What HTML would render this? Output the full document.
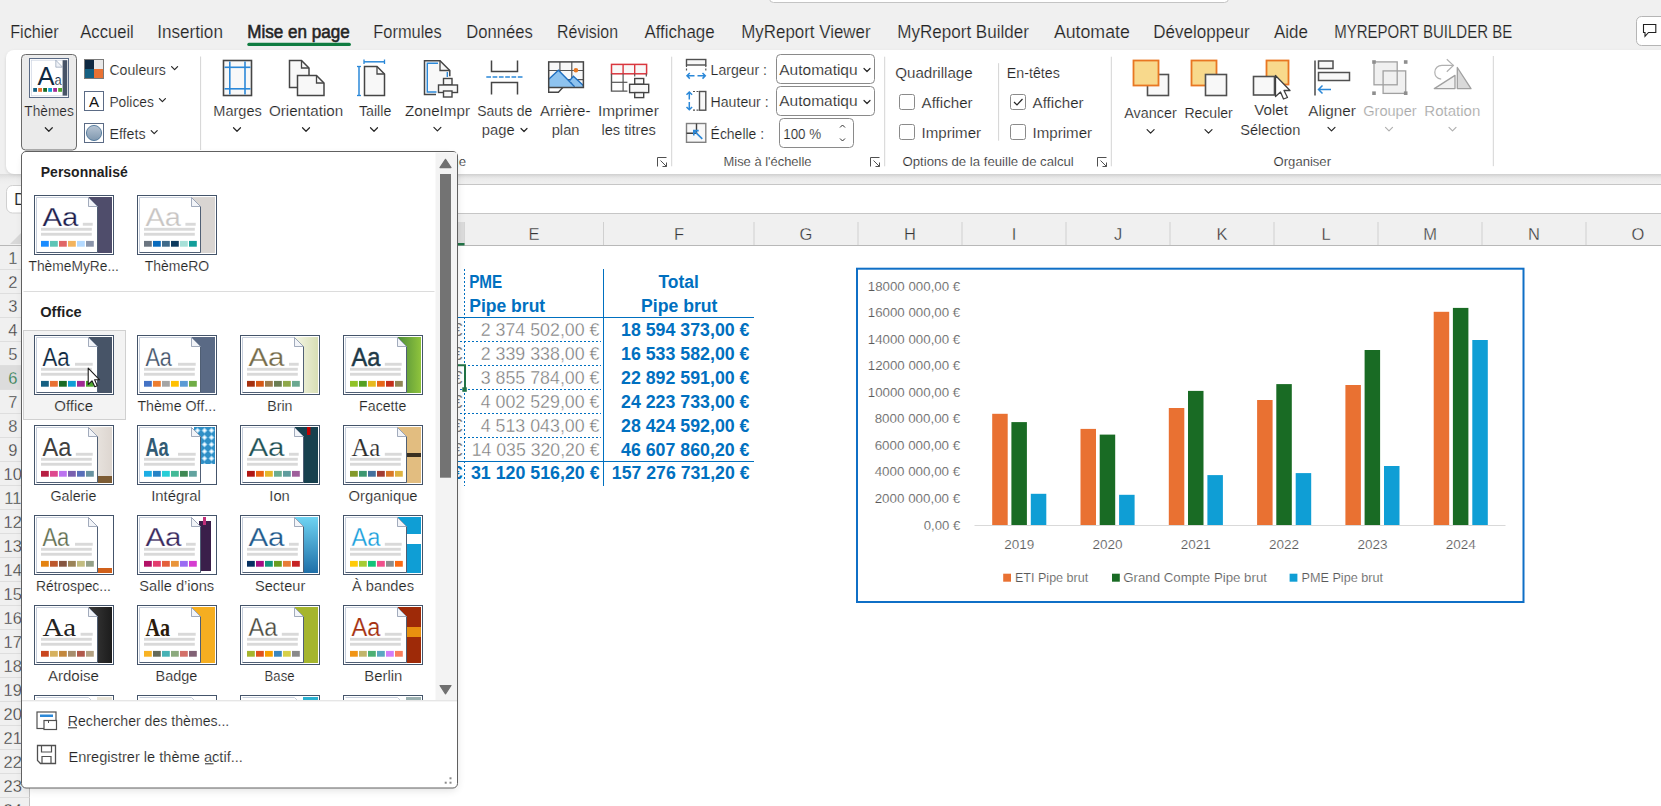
<!DOCTYPE html>
<html><head><meta charset="utf-8"><title>Excel</title>
<style>html,body{margin:0;padding:0;background:#f0f0f0;overflow:hidden}svg{display:block}text{font-family:"Liberation Sans",sans-serif}</style>
</head><body>
<svg width="1661" height="806" viewBox="0 0 1661 806">
<rect x="0" y="0" width="1661" height="806" fill="#f0f0f0"/>
<text x="10.2" y="37.8" font-size="17.5" textLength="48.5" lengthAdjust="spacingAndGlyphs" fill="#242424" stroke="#f0f0f0" stroke-width="0.18">Fichier</text>
<text x="80.3" y="37.8" font-size="17.5" textLength="53.5" lengthAdjust="spacingAndGlyphs" fill="#242424" stroke="#f0f0f0" stroke-width="0.18">Accueil</text>
<text x="157.3" y="37.8" font-size="17.5" textLength="65.6" lengthAdjust="spacingAndGlyphs" fill="#242424" stroke="#f0f0f0" stroke-width="0.18">Insertion</text>
<text x="247.3" y="37.8" font-size="17.5" textLength="102.5" lengthAdjust="spacingAndGlyphs" fill="#242424" stroke="#242424" stroke-width="0.55">Mise en page</text>
<text x="373.3" y="37.8" font-size="17.5" textLength="68.4" lengthAdjust="spacingAndGlyphs" fill="#242424" stroke="#f0f0f0" stroke-width="0.18">Formules</text>
<text x="466.3" y="37.8" font-size="17.5" textLength="66.5" lengthAdjust="spacingAndGlyphs" fill="#242424" stroke="#f0f0f0" stroke-width="0.18">Données</text>
<text x="557.1" y="37.8" font-size="17.5" textLength="60.9" lengthAdjust="spacingAndGlyphs" fill="#242424" stroke="#f0f0f0" stroke-width="0.18">Révision</text>
<text x="644.4" y="37.8" font-size="17.5" textLength="70.3" lengthAdjust="spacingAndGlyphs" fill="#242424" stroke="#f0f0f0" stroke-width="0.18">Affichage</text>
<text x="741.3" y="37.8" font-size="17.5" textLength="129.3" lengthAdjust="spacingAndGlyphs" fill="#242424" stroke="#f0f0f0" stroke-width="0.18">MyReport Viewer</text>
<text x="897.2" y="37.8" font-size="17.5" textLength="131.8" lengthAdjust="spacingAndGlyphs" fill="#242424" stroke="#f0f0f0" stroke-width="0.18">MyReport Builder</text>
<text x="1053.9" y="37.8" font-size="17.5" textLength="75.9" lengthAdjust="spacingAndGlyphs" fill="#242424" stroke="#f0f0f0" stroke-width="0.18">Automate</text>
<text x="1153.3" y="37.8" font-size="17.5" textLength="96.4" lengthAdjust="spacingAndGlyphs" fill="#242424" stroke="#f0f0f0" stroke-width="0.18">Développeur</text>
<text x="1274.0" y="37.8" font-size="17.5" textLength="33.9" lengthAdjust="spacingAndGlyphs" fill="#242424" stroke="#f0f0f0" stroke-width="0.18">Aide</text>
<text x="1334.2" y="37.8" font-size="17.5" textLength="178.0" lengthAdjust="spacingAndGlyphs" fill="#242424" stroke="#f0f0f0" stroke-width="0.18">MYREPORT BUILDER BE</text>
<rect x="247.3" y="42.8" width="103.6" height="3.2" fill="#107c41" rx="1.6"/>
<rect x="769.5" y="-10" width="459" height="12.5" fill="#ffffff" stroke="#c4c4c4" stroke-width="1" rx="4"/>
<rect x="1636.5" y="16.5" width="40" height="29" fill="#ffffff" stroke="#b5b5b5" stroke-width="1" rx="5"/>
<path d="M1643.5 24.5h12.3v8h-7.3l-3.5 3.8v-3.8h-1.5z" fill="none" stroke="#202020" stroke-width="1.1"/>
<defs><filter id="rsh" x="-5%" y="-20%" width="110%" height="150%"><feGaussianBlur stdDeviation="1.6"/></filter><filter id="dsh" x="-10%" y="-10%" width="130%" height="130%"><feGaussianBlur stdDeviation="4"/></filter><linearGradient id="band" x1="0" y1="0" x2="0" y2="1"><stop offset="0" stop-color="#dcdcdc"/><stop offset="0.5" stop-color="#ececec"/><stop offset="1" stop-color="#f0f0f0"/></linearGradient></defs>
<rect x="0" y="174" width="1661" height="10.5" fill="url(#band)"/>
<rect x="6" y="51.5" width="1681" height="123.5" fill="#c8c8c8" rx="8" filter="url(#rsh)" opacity="0.8"/>
<rect x="6" y="50" width="1681" height="124" fill="#ffffff" rx="8"/>
<line x1="200.6" y1="56.5" x2="200.6" y2="150" stroke="#d4d4d4" stroke-width="1" />
<line x1="671.7" y1="56.7" x2="671.7" y2="166.3" stroke="#d4d4d4" stroke-width="1" />
<line x1="884.7" y1="56.7" x2="884.7" y2="166.3" stroke="#d4d4d4" stroke-width="1" />
<line x1="1111.3" y1="56.7" x2="1111.3" y2="166.3" stroke="#d4d4d4" stroke-width="1" />
<line x1="1493.3" y1="56" x2="1493.3" y2="166.2" stroke="#d4d4d4" stroke-width="1" />
<line x1="998.6" y1="63.2" x2="998.6" y2="140.7" stroke="#d4d4d4" stroke-width="1" />
<rect x="21.5" y="54.5" width="55" height="95.5" fill="#ebebeb" stroke="#6b6b6b" stroke-width="1" rx="4"/>
<rect x="29.5" y="58.5" width="39" height="39" fill="#ffffff" stroke="#5b6b85" stroke-width="1"/>
<rect x="31.3" y="60.2" width="35.6" height="35.6" fill="#ffffff" stroke="#c9d2e0" stroke-width="0.7"/>
<rect x="62.6" y="60.2" width="4.6" height="35.4" fill="#475467"/>
<path d="M55.8 60.2 L62.6 67.2 L55.8 67.2 Z" fill="#eef1f6" stroke="#8090a8" stroke-width="0.6"/>
<text x="37.5" y="85" font-size="26" textLength="17" lengthAdjust="spacingAndGlyphs" fill="#0e2841">A</text>
<text x="54.5" y="85" font-size="14.5" textLength="7.2" lengthAdjust="spacingAndGlyphs" fill="#0e2841" stroke="#ffffff" stroke-width="0.18">a</text>
<rect x="33.2" y="88" width="3.8" height="3.8" fill="#156082"/>
<rect x="38.2" y="88" width="3.8" height="3.8" fill="#e97132"/>
<rect x="43.2" y="88" width="3.8" height="3.8" fill="#196b24"/>
<rect x="48.2" y="88" width="3.8" height="3.8" fill="#0f9ed5"/>
<rect x="53.2" y="88" width="3.8" height="3.8" fill="#a02b93"/>
<rect x="58.2" y="88" width="3.8" height="3.8" fill="#4ea72e"/>
<text x="24.3" y="115.6" font-size="15" textLength="49.5" lengthAdjust="spacingAndGlyphs" fill="#262626" stroke="#ffffff" stroke-width="0.18">Thèmes</text>
<path d="M45.3 127.75L48.8 131.25L52.3 127.75" fill="none" stroke="#262626" stroke-width="1.2" stroke-linecap="round" stroke-linejoin="round"/>
<rect x="84.5" y="59.5" width="19" height="19" fill="#0e2841" stroke="#7a7a7a" stroke-width="1"/>
<rect x="94" y="59.5" width="9.5" height="9.5" fill="#e8e8e8"/>
<rect x="84.5" y="69" width="9.5" height="9.5" fill="#156082"/>
<rect x="94" y="69" width="9.5" height="9.5" fill="#e97132"/>
<rect x="84.5" y="59.5" width="19" height="19" fill="none" stroke="#7a7a7a" stroke-width="1"/>
<text x="109.4" y="74.7" font-size="15" textLength="56.5" lengthAdjust="spacingAndGlyphs" fill="#262626" stroke="#ffffff" stroke-width="0.18">Couleurs</text>
<path d="M171.6 66.7L174.6 69.7L177.6 66.7" fill="none" stroke="#262626" stroke-width="1.2" stroke-linecap="round" stroke-linejoin="round"/>
<rect x="84.5" y="91.5" width="19" height="19" fill="#ffffff" stroke="#5b6b85" stroke-width="1"/>
<text x="88.9" y="106.8" font-size="15.4" textLength="10.1" lengthAdjust="spacingAndGlyphs" fill="#111111" stroke-width="0">A</text>
<text x="109.4" y="106.9" font-size="15" textLength="44.5" lengthAdjust="spacingAndGlyphs" fill="#262626" stroke="#ffffff" stroke-width="0.18">Polices</text>
<path d="M159.4 98.7L162.4 101.7L165.4 98.7" fill="none" stroke="#262626" stroke-width="1.2" stroke-linecap="round" stroke-linejoin="round"/>
<rect x="84.5" y="123.5" width="19" height="19" fill="#ffffff" stroke="#5b6b85" stroke-width="1"/>
<defs><linearGradient id="eff" x1="0" y1="0" x2="0" y2="1"><stop offset="0" stop-color="#b7c5d4"/><stop offset="1" stop-color="#7f97ae"/></linearGradient></defs>
<circle cx="94" cy="133" r="7.6" fill="url(#eff)" stroke="#3d6a90" stroke-width="0.8"/>
<text x="109.4" y="138.7" font-size="15" textLength="36.2" lengthAdjust="spacingAndGlyphs" fill="#262626" stroke="#ffffff" stroke-width="0.18">Effets</text>
<path d="M151.2 130.7L154.2 133.7L157.2 130.7" fill="none" stroke="#262626" stroke-width="1.2" stroke-linecap="round" stroke-linejoin="round"/>
<rect x="223.5" y="60.5" width="28" height="35" fill="#f8f8f8" stroke="#454545" stroke-width="1.6"/>
<line x1="229.8" y1="61.5" x2="229.8" y2="94.5" stroke="#2b88d8" stroke-width="1.6" />
<line x1="245" y1="61.5" x2="245" y2="94.5" stroke="#2b88d8" stroke-width="1.6" />
<line x1="224.5" y1="67.3" x2="250.5" y2="67.3" stroke="#2b88d8" stroke-width="1.6" />
<line x1="224.5" y1="88.8" x2="250.5" y2="88.8" stroke="#2b88d8" stroke-width="1.6" />
<text x="213.3" y="115.7" font-size="15" textLength="48.5" lengthAdjust="spacingAndGlyphs" fill="#262626" stroke="#ffffff" stroke-width="0.18">Marges</text>
<path d="M233.5 127.75L237 131.25L240.5 127.75" fill="none" stroke="#262626" stroke-width="1.2" stroke-linecap="round" stroke-linejoin="round"/>
<path d="M297 87.5 H289.5 V60.5 H301.5 L309 68 V75.5" fill="#f8f8f8" stroke="#454545" stroke-width="1.5"/>
<path d="M301.5 60.5 V68 H309" fill="none" stroke="#454545" stroke-width="1.3"/>
<path d="M297.5 75.5 H316.5 L324 83 V95.5 H297.5 Z" fill="#f8f8f8" stroke="#454545" stroke-width="1.5"/>
<path d="M316.5 75.5 V83 H324" fill="none" stroke="#454545" stroke-width="1.3"/>
<text x="268.9" y="115.7" font-size="15" textLength="74.3" lengthAdjust="spacingAndGlyphs" fill="#262626" stroke="#ffffff" stroke-width="0.18">Orientation</text>
<path d="M302.5 127.75L306 131.25L309.5 127.75" fill="none" stroke="#262626" stroke-width="1.2" stroke-linecap="round" stroke-linejoin="round"/>
<path d="M364.5 66.5 H377 L384.5 74 V95.5 H364.5 Z" fill="#f8f8f8" stroke="#454545" stroke-width="1.5"/>
<path d="M377 66.5 V74 H384.5" fill="none" stroke="#454545" stroke-width="1.3"/>
<line x1="364" y1="61.8" x2="384.5" y2="61.8" stroke="#2b88d8" stroke-width="1.5" />
<line x1="364" y1="59.5" x2="364" y2="64" stroke="#2b88d8" stroke-width="1.3" />
<line x1="384.5" y1="59.5" x2="384.5" y2="64" stroke="#2b88d8" stroke-width="1.3" />
<line x1="359" y1="66.5" x2="359" y2="95.5" stroke="#2b88d8" stroke-width="1.5" />
<line x1="357" y1="66.5" x2="361" y2="66.5" stroke="#2b88d8" stroke-width="1.3" />
<line x1="357" y1="95.5" x2="361" y2="95.5" stroke="#2b88d8" stroke-width="1.3" />
<text x="358.9" y="115.7" font-size="15" textLength="32.4" lengthAdjust="spacingAndGlyphs" fill="#262626" stroke="#ffffff" stroke-width="0.18">Taille</text>
<path d="M370.5 127.75L374 131.25L377.5 127.75" fill="none" stroke="#262626" stroke-width="1.2" stroke-linecap="round" stroke-linejoin="round"/>
<path d="M436 94.5H424.5V60.8H440L449.8 70.5V76.3" fill="#f8f8f8" stroke="#454545" stroke-width="1.5"/>
<path d="M440 60.8V70.5H449.8" fill="none" stroke="#454545" stroke-width="1.3"/>
<path d="M436.5 92H427.3V63.3H438" fill="none" stroke="#2b88d8" stroke-width="1.4"/>
<line x1="447.3" y1="72" x2="447.3" y2="77" stroke="#2b88d8" stroke-width="1.4" />
<rect x="443.5" y="78.5" width="8.5" height="6.5" fill="#f8f8f8" stroke="#454545" stroke-width="1.4"/>
<rect x="438.5" y="85" width="19" height="7.5" fill="#f8f8f8" stroke="#454545" stroke-width="1.4"/>
<rect x="443.5" y="91" width="8.5" height="6" fill="#f8f8f8" stroke="#454545" stroke-width="1.4"/>
<text x="405" y="115.7" font-size="15" textLength="65" lengthAdjust="spacingAndGlyphs" fill="#262626" stroke="#ffffff" stroke-width="0.18">ZoneImpr</text>
<path d="M433.9 127.44999999999999L437.4 130.95L440.9 127.44999999999999" fill="none" stroke="#262626" stroke-width="1.2" stroke-linecap="round" stroke-linejoin="round"/>
<path d="M491.5 60.5 V71.5 H517.5 V60.5" fill="none" stroke="#454545" stroke-width="1.5"/>
<path d="M491.5 94.5 V82.5 H517.5 V94.5" fill="none" stroke="#454545" stroke-width="1.5"/>
<line x1="486.3" y1="77" x2="522.8" y2="77" stroke="#2b88d8" stroke-width="1.4" stroke-dasharray="4.7 1.6"/>
<text x="477.2" y="115.7" font-size="15" textLength="55.1" lengthAdjust="spacingAndGlyphs" fill="#262626" stroke="#ffffff" stroke-width="0.18">Sauts de</text>
<text x="481.8" y="135.1" font-size="15" textLength="32.8" lengthAdjust="spacingAndGlyphs" fill="#262626" stroke="#ffffff" stroke-width="0.18">page</text>
<path d="M521 128.5L524 131.5L527 128.5" fill="none" stroke="#262626" stroke-width="1.2" stroke-linecap="round" stroke-linejoin="round"/>
<rect x="548.7" y="61.9" width="34.7" height="25.6" fill="#f8f8f8"/>
<line x1="559.9" y1="61.9" x2="559.9" y2="87.5" stroke="#555" stroke-width="1.2" />
<line x1="571.8" y1="61.9" x2="571.8" y2="87.5" stroke="#555" stroke-width="1.2" />
<line x1="548.7" y1="70.5" x2="583.4" y2="70.5" stroke="#555" stroke-width="1.2" />
<line x1="548.7" y1="79.6" x2="583.4" y2="79.6" stroke="#555" stroke-width="1.2" />
<path d="M548.7 87.5V79.2L558.4 70.2L574.7 86.8V87.5Z" fill="#8ec3ef" stroke="#fff" stroke-width="0.01"/>
<path d="M569.6 80.6L573.4 76.3L583.4 85.5V87.5H576Z" fill="#8ec3ef"/>
<path d="M548.7 79.2L558.4 70.2L574.7 86.8" fill="none" stroke="#1f6fc0" stroke-width="1.4"/>
<path d="M569.6 80.6L573.4 76.3L583.4 85.5" fill="none" stroke="#1f6fc0" stroke-width="1.4"/>
<circle cx="575.9" cy="70.3" r="2.3" fill="#e87722"/>
<rect x="548.7" y="61.9" width="34.7" height="25.6" fill="none" stroke="#454545" stroke-width="1.5"/>
<path d="M548.7 87.5V92.2H558.4L562.8 87.5" fill="none" stroke="#454545" stroke-width="1.4"/>
<text x="540" y="115.7" font-size="15" textLength="50.5" lengthAdjust="spacingAndGlyphs" fill="#262626" stroke="#ffffff" stroke-width="0.18">Arrière-</text>
<text x="551.7" y="135.1" font-size="15" textLength="27.8" lengthAdjust="spacingAndGlyphs" fill="#262626" stroke="#ffffff" stroke-width="0.18">plan</text>
<rect x="611.5" y="64.4" width="35.1" height="9.4" fill="#f8f8f8" stroke="#d9363e" stroke-width="1.5"/>
<line x1="623.1" y1="64.4" x2="623.1" y2="73.8" stroke="#d9363e" stroke-width="1.4" />
<line x1="634.7" y1="64.4" x2="634.7" y2="73.8" stroke="#d9363e" stroke-width="1.4" />
<path d="M611.5 73.8V91.1H627.4" fill="none" stroke="#555" stroke-width="1.4"/>
<line x1="611.5" y1="82.3" x2="627.4" y2="82.3" stroke="#555" stroke-width="1.2" />
<line x1="623.1" y1="73.8" x2="623.1" y2="91.1" stroke="#555" stroke-width="1.2" />
<line x1="634.7" y1="73.8" x2="634.7" y2="76.5" stroke="#555" stroke-width="1.2" />
<line x1="646.3" y1="73.8" x2="646.3" y2="76.5" stroke="#555" stroke-width="1.2" />
<rect x="634.7" y="78.5" width="9" height="5.8" fill="#f8f8f8" stroke="#454545" stroke-width="1.4"/>
<rect x="629.6" y="84.3" width="19.1" height="8.3" fill="#f8f8f8" stroke="#454545" stroke-width="1.4"/>
<rect x="634.7" y="92.6" width="9" height="5" fill="#f8f8f8" stroke="#454545" stroke-width="1.4"/>
<text x="598" y="115.7" font-size="15" textLength="60.8" lengthAdjust="spacingAndGlyphs" fill="#262626" stroke="#ffffff" stroke-width="0.18">Imprimer</text>
<text x="601.4" y="135.1" font-size="15" textLength="54.5" lengthAdjust="spacingAndGlyphs" fill="#262626" stroke="#ffffff" stroke-width="0.18">les titres</text>
<path d="M657.5 166.5V157.5H666.5" fill="none" stroke="#505050" stroke-width="1"/>
<path d="M660.5 160.5L666.5 166.5M666.5 162.5V166.5H662.5" fill="none" stroke="#505050" stroke-width="1"/>
<path d="M870.5 166.5V157.5H879.5" fill="none" stroke="#505050" stroke-width="1"/>
<path d="M873.5 160.5L879.5 166.5M879.5 162.5V166.5H875.5" fill="none" stroke="#505050" stroke-width="1"/>
<path d="M1097.5 166.5V157.5H1106.5" fill="none" stroke="#505050" stroke-width="1"/>
<path d="M1100.5 160.5L1106.5 166.5M1106.5 162.5V166.5H1102.5" fill="none" stroke="#505050" stroke-width="1"/>
<text x="387" y="166" font-size="12.5" textLength="79" lengthAdjust="spacingAndGlyphs" fill="#262626" stroke="#ffffff" stroke-width="0.18">Mise en page</text>
<rect x="686.5" y="59.5" width="19.3" height="5.5" fill="#f8f8f8" stroke="#505050" stroke-width="1.4"/>
<line x1="686.5" y1="65" x2="686.5" y2="71" stroke="#505050" stroke-width="1.2" stroke-dasharray="2 1.5"/>
<line x1="705.8" y1="65" x2="705.8" y2="71" stroke="#505050" stroke-width="1.2" stroke-dasharray="2 1.5"/>
<path d="M687 75.8H694.5M689.8 73L687 75.8L689.8 78.6M697.5 75.8H705.3M702.5 73L705.3 75.8L702.5 78.6" fill="none" stroke="#2b88d8" stroke-width="1.5"/>
<text x="710.6" y="74.8" font-size="15" textLength="56.3" lengthAdjust="spacingAndGlyphs" fill="#262626" stroke="#ffffff" stroke-width="0.18">Largeur :</text>
<rect x="776.5" y="54.5" width="98" height="29" fill="#ffffff" stroke="#8a8a8a" stroke-width="1" rx="4"/>
<text x="779.3" y="74.6" font-size="15" textLength="78.3" lengthAdjust="spacingAndGlyphs" fill="#262626" stroke="#ffffff" stroke-width="0.18">Automatiqu</text>
<path d="M864 68.5L867 71.5L870 68.5" fill="none" stroke="#262626" stroke-width="1.2" stroke-linecap="round" stroke-linejoin="round"/>
<rect x="699.5" y="91.5" width="6.3" height="18.7" fill="#f8f8f8" stroke="#505050" stroke-width="1.4"/>
<path d="M693 91.5H699M693 110.2H699" fill="none" stroke="#505050" stroke-width="1.2" stroke-dasharray="2 1.5"/>
<path d="M689.3 92V99.5M686.5 94.8L689.3 92L692.1 94.8M689.3 102V109.8M686.5 107L689.3 109.8L692.1 107" fill="none" stroke="#2b88d8" stroke-width="1.5"/>
<text x="710.6" y="106.6" font-size="15" textLength="58" lengthAdjust="spacingAndGlyphs" fill="#262626" stroke="#ffffff" stroke-width="0.18">Hauteur :</text>
<rect x="776.5" y="86.5" width="98" height="29" fill="#ffffff" stroke="#8a8a8a" stroke-width="1" rx="4"/>
<text x="779.3" y="106.4" font-size="15" textLength="78.3" lengthAdjust="spacingAndGlyphs" fill="#262626" stroke="#ffffff" stroke-width="0.18">Automatiqu</text>
<path d="M864 100.5L867 103.5L870 100.5" fill="none" stroke="#262626" stroke-width="1.2" stroke-linecap="round" stroke-linejoin="round"/>
<rect x="686.5" y="123.5" width="19.3" height="18.8" fill="#f8f8f8" stroke="#808080" stroke-width="1.4"/>
<path d="M686.5 133.3H696.5V123.5" fill="none" stroke="#404040" stroke-width="1.4"/>
<path d="M702.3 138.8L693.8 130.6M693.8 135.5V130.6H698.7" fill="none" stroke="#2b88d8" stroke-width="1.6"/>
<text x="710.6" y="139.1" font-size="15" textLength="53.5" lengthAdjust="spacingAndGlyphs" fill="#262626" stroke="#ffffff" stroke-width="0.18">Échelle :</text>
<rect x="779.5" y="118.5" width="74" height="29" fill="#ffffff" stroke="#8a8a8a" stroke-width="1" rx="4"/>
<text x="783.2" y="139.1" font-size="15" textLength="38" lengthAdjust="spacingAndGlyphs" fill="#262626" stroke="#ffffff" stroke-width="0.18">100 %</text>
<path d="M840 127.5L842.5 125L845 127.5" fill="none" stroke="#303030" stroke-width="1"/>
<path d="M840 138.5L842.5 141L845 138.5" fill="none" stroke="#303030" stroke-width="1"/>
<text x="723.5" y="165.5" font-size="12.5" textLength="88" lengthAdjust="spacingAndGlyphs" fill="#262626" stroke="#ffffff" stroke-width="0.18">Mise à l&#x27;échelle</text>
<text x="895.2" y="77.9" font-size="15" textLength="77.5" lengthAdjust="spacingAndGlyphs" fill="#262626" stroke="#ffffff" stroke-width="0.18">Quadrillage</text>
<text x="1006.8" y="77.9" font-size="15" textLength="53" lengthAdjust="spacingAndGlyphs" fill="#262626" stroke="#ffffff" stroke-width="0.18">En-têtes</text>
<rect x="899.5" y="94.5" width="15" height="15" fill="#ffffff" stroke="#8a8a8a" stroke-width="1" rx="2"/>
<text x="921.6" y="108.1" font-size="15" textLength="51" lengthAdjust="spacingAndGlyphs" fill="#262626" stroke="#ffffff" stroke-width="0.18">Afficher</text>
<rect x="899.5" y="124.5" width="15" height="15" fill="#ffffff" stroke="#8a8a8a" stroke-width="1" rx="2"/>
<text x="921.6" y="138.1" font-size="15" textLength="59.5" lengthAdjust="spacingAndGlyphs" fill="#262626" stroke="#ffffff" stroke-width="0.18">Imprimer</text>
<rect x="1010.5" y="94.5" width="15" height="15" fill="#ffffff" stroke="#8a8a8a" stroke-width="1" rx="2"/>
<text x="1032.6" y="108.1" font-size="15" textLength="51" lengthAdjust="spacingAndGlyphs" fill="#262626" stroke="#ffffff" stroke-width="0.18">Afficher</text>
<rect x="1010.5" y="124.5" width="15" height="15" fill="#ffffff" stroke="#8a8a8a" stroke-width="1" rx="2"/>
<text x="1032.6" y="138.1" font-size="15" textLength="59.5" lengthAdjust="spacingAndGlyphs" fill="#262626" stroke="#ffffff" stroke-width="0.18">Imprimer</text>
<path d="M1014 102L1017 105L1022.5 99" fill="none" stroke="#262626" stroke-width="1.2"/>
<text x="902.5" y="165.5" font-size="12.5" textLength="171.3" lengthAdjust="spacingAndGlyphs" fill="#262626" stroke="#ffffff" stroke-width="0.18">Options de la feuille de calcul</text>
<rect x="1147.5" y="74.5" width="21" height="21" fill="#f8f8f8" stroke="#505050" stroke-width="1.6"/>
<rect x="1133.5" y="60.5" width="25" height="25" fill="#f8d98c" stroke="#e87722" stroke-width="1.8"/>
<text x="1124.3" y="117.8" font-size="15" textLength="52.4" lengthAdjust="spacingAndGlyphs" fill="#262626" stroke="#ffffff" stroke-width="0.18">Avancer</text>
<path d="M1147.1 129.65L1150.6 133.15L1154.1 129.65" fill="none" stroke="#262626" stroke-width="1.2" stroke-linecap="round" stroke-linejoin="round"/>
<rect x="1191.5" y="60.5" width="25" height="25" fill="#f8d98c" stroke="#e87722" stroke-width="1.8"/>
<rect x="1205.5" y="74.5" width="21" height="21" fill="#f8f8f8" stroke="#505050" stroke-width="1.6"/>
<text x="1184.4" y="117.8" font-size="15" textLength="48.4" lengthAdjust="spacingAndGlyphs" fill="#262626" stroke="#ffffff" stroke-width="0.18">Reculer</text>
<path d="M1205.0 129.65L1208.5 133.15L1212.0 129.65" fill="none" stroke="#262626" stroke-width="1.2" stroke-linecap="round" stroke-linejoin="round"/>
<rect x="1266.5" y="60.5" width="22" height="24" fill="#f8d98c" stroke="#e87722" stroke-width="1.8"/>
<rect x="1253.5" y="76.5" width="21" height="18.5" fill="#f8f8f8" stroke="#505050" stroke-width="1.6"/>
<path d="M1275.5 75.5L1290 90.5H1284L1287.5 97.5L1283.5 99L1280.5 92L1275.5 96.5Z" fill="#ffffff" stroke="#404040" stroke-width="1.3" stroke-linejoin="round"/>
<text x="1254.2" y="115.1" font-size="15" textLength="33.8" lengthAdjust="spacingAndGlyphs" fill="#262626" stroke="#ffffff" stroke-width="0.18">Volet</text>
<text x="1240.2" y="135.3" font-size="15" textLength="60.2" lengthAdjust="spacingAndGlyphs" fill="#262626" stroke="#ffffff" stroke-width="0.18">Sélection</text>
<line x1="1315" y1="60.5" x2="1315" y2="95.5" stroke="#555" stroke-width="1.6" />
<rect x="1318.5" y="61" width="14.5" height="7.5" fill="#f8f8f8" stroke="#505050" stroke-width="1.5"/>
<rect x="1318.5" y="72.5" width="31" height="8" fill="#f8f8f8" stroke="#505050" stroke-width="1.5"/>
<path d="M1331 89.5H1318.5M1322.5 85.5L1318.5 89.5L1322.5 93.5" fill="none" stroke="#2b88d8" stroke-width="1.5"/>
<text x="1308.3" y="115.5" font-size="15" textLength="47.6" lengthAdjust="spacingAndGlyphs" fill="#262626" stroke="#ffffff" stroke-width="0.18">Aligner</text>
<path d="M1328.0 127.44999999999999L1331.5 130.95L1335.0 127.44999999999999" fill="none" stroke="#262626" stroke-width="1.2" stroke-linecap="round" stroke-linejoin="round"/>
<rect x="1374" y="61.9" width="23.2" height="22.9" fill="#f0f0f0"/>
<rect x="1383.1" y="70.9" width="22.6" height="22.5" fill="#f0f0f0"/>
<rect x="1374" y="61.9" width="23.2" height="22.9" fill="none" stroke="#a0a0a0" stroke-width="1.3"/>
<rect x="1383.1" y="70.9" width="22.6" height="22.5" fill="none" stroke="#a0a0a0" stroke-width="1.3"/>
<rect x="1372.2" y="60.2" width="3.6" height="3.6" fill="#8e8e8e"/>
<rect x="1403.9" y="60.2" width="3.6" height="3.6" fill="#8e8e8e"/>
<rect x="1372.2" y="91.4" width="3.6" height="3.6" fill="#8e8e8e"/>
<rect x="1403.9" y="91.4" width="3.6" height="3.6" fill="#8e8e8e"/>
<text x="1363.2" y="115.5" font-size="15" textLength="53.5" lengthAdjust="spacingAndGlyphs" fill="#a8a8a8" stroke="#ffffff" stroke-width="0.18">Grouper</text>
<path d="M1385.5 127.44999999999999L1389 130.95L1392.5 127.44999999999999" fill="none" stroke="#b0b0b0" stroke-width="1.2" stroke-linecap="round" stroke-linejoin="round"/>
<path d="M1441.2 79.2C1436.5 78.5 1434.8 75 1434.8 72.3C1434.8 68 1438 65.4 1441.9 65.4H1453.6" fill="none" stroke="#b0b0b0" stroke-width="1.2"/>
<path d="M1446.8 59.3L1453.4 65.4L1446.8 71.8" fill="none" stroke="#b0b0b0" stroke-width="1.2"/>
<path d="M1434.3 88.6L1455 75.4V88.6Z" fill="#f0f0f0" stroke="#a0a0a0" stroke-width="1.3" stroke-linejoin="round"/>
<path d="M1457.3 67.5L1471 88.6H1457.3Z" fill="#d9d9d9" stroke="#a0a0a0" stroke-width="1.3" stroke-linejoin="round"/>
<text x="1424.3" y="115.5" font-size="15" textLength="56" lengthAdjust="spacingAndGlyphs" fill="#a8a8a8" stroke="#ffffff" stroke-width="0.18">Rotation</text>
<path d="M1449.0 127.44999999999999L1452.5 130.95L1456.0 127.44999999999999" fill="none" stroke="#b0b0b0" stroke-width="1.2" stroke-linecap="round" stroke-linejoin="round"/>
<text x="1273.6" y="166.3" font-size="12.5" textLength="57.4" lengthAdjust="spacingAndGlyphs" fill="#262626" stroke="#ffffff" stroke-width="0.18">Organiser</text>
<line x1="60" y1="184.5" x2="1661" y2="184.5" stroke="#c6c6c6" stroke-width="1" />
<rect x="0" y="185" width="1661" height="28" fill="#f0f0f0"/>
<rect x="60" y="185" width="1661" height="28" fill="#ffffff"/>
<rect x="6.5" y="185.5" width="60" height="27.5" fill="#ffffff" stroke="#d0d0d0" stroke-width="1" rx="6"/>
<text x="14.1" y="204.5" font-size="16.3" textLength="22" lengthAdjust="spacingAndGlyphs" fill="#262626" stroke="#ffffff" stroke-width="0.18">D6</text>
<line x1="60" y1="213.5" x2="1661" y2="213.5" stroke="#c6c6c6" stroke-width="1" />
<rect x="0" y="214" width="1661" height="31" fill="#f0f0f0"/>
<line x1="0" y1="245.5" x2="1661" y2="245.5" stroke="#b8b8b8" stroke-width="1" />
<line x1="464.5" y1="222" x2="464.5" y2="245" stroke="#d0d0d0" stroke-width="1" />
<line x1="603.5" y1="222" x2="603.5" y2="245" stroke="#d0d0d0" stroke-width="1" />
<line x1="754" y1="222" x2="754" y2="245" stroke="#d0d0d0" stroke-width="1" />
<line x1="858" y1="222" x2="858" y2="245" stroke="#d0d0d0" stroke-width="1" />
<line x1="962" y1="222" x2="962" y2="245" stroke="#d0d0d0" stroke-width="1" />
<line x1="1066" y1="222" x2="1066" y2="245" stroke="#d0d0d0" stroke-width="1" />
<line x1="1170" y1="222" x2="1170" y2="245" stroke="#d0d0d0" stroke-width="1" />
<line x1="1274" y1="222" x2="1274" y2="245" stroke="#d0d0d0" stroke-width="1" />
<line x1="1378" y1="222" x2="1378" y2="245" stroke="#d0d0d0" stroke-width="1" />
<line x1="1482" y1="222" x2="1482" y2="245" stroke="#d0d0d0" stroke-width="1" />
<line x1="1586" y1="222" x2="1586" y2="245" stroke="#d0d0d0" stroke-width="1" />
<line x1="1690" y1="222" x2="1690" y2="245" stroke="#d0d0d0" stroke-width="1" />
<rect x="380" y="222" width="84.5" height="23" fill="#dcdcdc"/>
<rect x="380" y="243" width="84.5" height="2.5" fill="#217346"/>
<text x="534" y="239.8" font-size="16.5" fill="#363636" text-anchor="middle" stroke="#f0f0f0" stroke-width="0.3">E</text>
<text x="679" y="239.8" font-size="16.5" fill="#363636" text-anchor="middle" stroke="#f0f0f0" stroke-width="0.3">F</text>
<text x="806" y="239.8" font-size="16.5" fill="#363636" text-anchor="middle" stroke="#f0f0f0" stroke-width="0.3">G</text>
<text x="910" y="239.8" font-size="16.5" fill="#363636" text-anchor="middle" stroke="#f0f0f0" stroke-width="0.3">H</text>
<text x="1014" y="239.8" font-size="16.5" fill="#363636" text-anchor="middle" stroke="#f0f0f0" stroke-width="0.3">I</text>
<text x="1118" y="239.8" font-size="16.5" fill="#363636" text-anchor="middle" stroke="#f0f0f0" stroke-width="0.3">J</text>
<text x="1222" y="239.8" font-size="16.5" fill="#363636" text-anchor="middle" stroke="#f0f0f0" stroke-width="0.3">K</text>
<text x="1326" y="239.8" font-size="16.5" fill="#363636" text-anchor="middle" stroke="#f0f0f0" stroke-width="0.3">L</text>
<text x="1430" y="239.8" font-size="16.5" fill="#363636" text-anchor="middle" stroke="#f0f0f0" stroke-width="0.3">M</text>
<text x="1534" y="239.8" font-size="16.5" fill="#363636" text-anchor="middle" stroke="#f0f0f0" stroke-width="0.3">N</text>
<text x="1638" y="239.8" font-size="16.5" fill="#363636" text-anchor="middle" stroke="#f0f0f0" stroke-width="0.3">O</text>
<path d="M10 244L22 232V244Z" fill="#d8d8d8"/>
<rect x="30" y="246" width="1661" height="806" fill="#ffffff"/>
<rect x="0" y="246" width="29.5" height="806" fill="#f0f0f0"/>
<line x1="29.5" y1="246" x2="29.5" y2="806" stroke="#c0c0c0" stroke-width="1" />
<rect x="0" y="365.5" width="29.5" height="24" fill="#dcdcdc"/>
<text x="12.8" y="263.8" font-size="16.5" fill="#363636" text-anchor="middle" stroke="#f0f0f0" stroke-width="0.3">1</text>
<line x1="0" y1="269.5" x2="29.5" y2="269.5" stroke="#dedede" stroke-width="1" />
<text x="12.8" y="287.8" font-size="16.5" fill="#363636" text-anchor="middle" stroke="#f0f0f0" stroke-width="0.3">2</text>
<line x1="0" y1="293.5" x2="29.5" y2="293.5" stroke="#dedede" stroke-width="1" />
<text x="12.8" y="311.8" font-size="16.5" fill="#363636" text-anchor="middle" stroke="#f0f0f0" stroke-width="0.3">3</text>
<line x1="0" y1="317.5" x2="29.5" y2="317.5" stroke="#dedede" stroke-width="1" />
<text x="12.8" y="335.8" font-size="16.5" fill="#363636" text-anchor="middle" stroke="#f0f0f0" stroke-width="0.3">4</text>
<line x1="0" y1="341.5" x2="29.5" y2="341.5" stroke="#dedede" stroke-width="1" />
<text x="12.8" y="359.8" font-size="16.5" fill="#363636" text-anchor="middle" stroke="#f0f0f0" stroke-width="0.3">5</text>
<line x1="0" y1="365.5" x2="29.5" y2="365.5" stroke="#dedede" stroke-width="1" />
<text x="12.8" y="383.8" font-size="16.5" fill="#217346" text-anchor="middle" stroke="#dcdcdc" stroke-width="0.3">6</text>
<line x1="0" y1="389.5" x2="29.5" y2="389.5" stroke="#dedede" stroke-width="1" />
<text x="12.8" y="407.8" font-size="16.5" fill="#363636" text-anchor="middle" stroke="#f0f0f0" stroke-width="0.3">7</text>
<line x1="0" y1="413.5" x2="29.5" y2="413.5" stroke="#dedede" stroke-width="1" />
<text x="12.8" y="431.8" font-size="16.5" fill="#363636" text-anchor="middle" stroke="#f0f0f0" stroke-width="0.3">8</text>
<line x1="0" y1="437.5" x2="29.5" y2="437.5" stroke="#dedede" stroke-width="1" />
<text x="12.8" y="455.8" font-size="16.5" fill="#363636" text-anchor="middle" stroke="#f0f0f0" stroke-width="0.3">9</text>
<line x1="0" y1="461.5" x2="29.5" y2="461.5" stroke="#dedede" stroke-width="1" />
<text x="12.8" y="479.8" font-size="16.5" fill="#363636" text-anchor="middle" stroke="#f0f0f0" stroke-width="0.3">10</text>
<line x1="0" y1="485.5" x2="29.5" y2="485.5" stroke="#dedede" stroke-width="1" />
<text x="12.8" y="503.8" font-size="16.5" fill="#363636" text-anchor="middle" stroke="#f0f0f0" stroke-width="0.3">11</text>
<line x1="0" y1="509.5" x2="29.5" y2="509.5" stroke="#dedede" stroke-width="1" />
<text x="12.8" y="527.8" font-size="16.5" fill="#363636" text-anchor="middle" stroke="#f0f0f0" stroke-width="0.3">12</text>
<line x1="0" y1="533.5" x2="29.5" y2="533.5" stroke="#dedede" stroke-width="1" />
<text x="12.8" y="551.8" font-size="16.5" fill="#363636" text-anchor="middle" stroke="#f0f0f0" stroke-width="0.3">13</text>
<line x1="0" y1="557.5" x2="29.5" y2="557.5" stroke="#dedede" stroke-width="1" />
<text x="12.8" y="575.8" font-size="16.5" fill="#363636" text-anchor="middle" stroke="#f0f0f0" stroke-width="0.3">14</text>
<line x1="0" y1="581.5" x2="29.5" y2="581.5" stroke="#dedede" stroke-width="1" />
<text x="12.8" y="599.8" font-size="16.5" fill="#363636" text-anchor="middle" stroke="#f0f0f0" stroke-width="0.3">15</text>
<line x1="0" y1="605.5" x2="29.5" y2="605.5" stroke="#dedede" stroke-width="1" />
<text x="12.8" y="623.8" font-size="16.5" fill="#363636" text-anchor="middle" stroke="#f0f0f0" stroke-width="0.3">16</text>
<line x1="0" y1="629.5" x2="29.5" y2="629.5" stroke="#dedede" stroke-width="1" />
<text x="12.8" y="647.8" font-size="16.5" fill="#363636" text-anchor="middle" stroke="#f0f0f0" stroke-width="0.3">17</text>
<line x1="0" y1="653.5" x2="29.5" y2="653.5" stroke="#dedede" stroke-width="1" />
<text x="12.8" y="671.8" font-size="16.5" fill="#363636" text-anchor="middle" stroke="#f0f0f0" stroke-width="0.3">18</text>
<line x1="0" y1="677.5" x2="29.5" y2="677.5" stroke="#dedede" stroke-width="1" />
<text x="12.8" y="695.8" font-size="16.5" fill="#363636" text-anchor="middle" stroke="#f0f0f0" stroke-width="0.3">19</text>
<line x1="0" y1="701.5" x2="29.5" y2="701.5" stroke="#dedede" stroke-width="1" />
<text x="12.8" y="719.8" font-size="16.5" fill="#363636" text-anchor="middle" stroke="#f0f0f0" stroke-width="0.3">20</text>
<line x1="0" y1="725.5" x2="29.5" y2="725.5" stroke="#dedede" stroke-width="1" />
<text x="12.8" y="743.8" font-size="16.5" fill="#363636" text-anchor="middle" stroke="#f0f0f0" stroke-width="0.3">21</text>
<line x1="0" y1="749.5" x2="29.5" y2="749.5" stroke="#dedede" stroke-width="1" />
<text x="12.8" y="767.8" font-size="16.5" fill="#363636" text-anchor="middle" stroke="#f0f0f0" stroke-width="0.3">22</text>
<line x1="0" y1="773.5" x2="29.5" y2="773.5" stroke="#dedede" stroke-width="1" />
<text x="12.8" y="791.8" font-size="16.5" fill="#363636" text-anchor="middle" stroke="#f0f0f0" stroke-width="0.3">23</text>
<line x1="0" y1="797.5" x2="29.5" y2="797.5" stroke="#dedede" stroke-width="1" />
<text x="12.8" y="815.8" font-size="16.5" fill="#363636" text-anchor="middle" stroke="#f0f0f0" stroke-width="0.3">24</text>
<line x1="464.5" y1="269" x2="464.5" y2="486" stroke="#0070c0" stroke-width="1" stroke-dasharray="2 2"/>
<line x1="603.5" y1="269" x2="603.5" y2="486" stroke="#0070c0" stroke-width="1" />
<line x1="440" y1="317.5" x2="754" y2="317.5" stroke="#0070c0" stroke-width="1" />
<line x1="440" y1="461.5" x2="754" y2="461.5" stroke="#0070c0" stroke-width="1" />
<line x1="440" y1="341.5" x2="601" y2="341.5" stroke="#0070c0" stroke-width="1" stroke-dasharray="2 2"/>
<line x1="440" y1="365.5" x2="601" y2="365.5" stroke="#0070c0" stroke-width="1" stroke-dasharray="2 2"/>
<line x1="440" y1="389.5" x2="601" y2="389.5" stroke="#0070c0" stroke-width="1" stroke-dasharray="2 2"/>
<line x1="440" y1="413.5" x2="601" y2="413.5" stroke="#0070c0" stroke-width="1" stroke-dasharray="2 2"/>
<line x1="440" y1="437.5" x2="601" y2="437.5" stroke="#0070c0" stroke-width="1" stroke-dasharray="2 2"/>
<text x="469.2" y="287.8" font-size="17.5" textLength="33" lengthAdjust="spacingAndGlyphs" font-weight="bold" fill="#0070c0">PME</text>
<text x="469.2" y="311.8" font-size="17.5" textLength="76" lengthAdjust="spacingAndGlyphs" font-weight="bold" fill="#0070c0">Pipe brut</text>
<text x="658.4" y="287.8" font-size="17.5" textLength="40.4" lengthAdjust="spacingAndGlyphs" font-weight="bold" fill="#0070c0">Total</text>
<text x="641" y="311.8" font-size="17.5" textLength="76.4" lengthAdjust="spacingAndGlyphs" font-weight="bold" fill="#0070c0">Pipe brut</text>
<text x="480.7" y="335.6" font-size="17.5" textLength="118.8" lengthAdjust="spacingAndGlyphs" fill="#767676" stroke="#ffffff" stroke-width="0.35">2 374 502,00 €</text>
<text x="621" y="335.6" font-size="17.5" textLength="128.5" lengthAdjust="spacingAndGlyphs" font-weight="bold" fill="#0070c0">18 594 373,00 €</text>
<text x="480.7" y="359.6" font-size="17.5" textLength="118.8" lengthAdjust="spacingAndGlyphs" fill="#767676" stroke="#ffffff" stroke-width="0.35">2 339 338,00 €</text>
<text x="621" y="359.6" font-size="17.5" textLength="128.5" lengthAdjust="spacingAndGlyphs" font-weight="bold" fill="#0070c0">16 533 582,00 €</text>
<text x="480.7" y="383.6" font-size="17.5" textLength="118.8" lengthAdjust="spacingAndGlyphs" fill="#767676" stroke="#ffffff" stroke-width="0.35">3 855 784,00 €</text>
<text x="621" y="383.6" font-size="17.5" textLength="128.5" lengthAdjust="spacingAndGlyphs" font-weight="bold" fill="#0070c0">22 892 591,00 €</text>
<text x="480.7" y="407.6" font-size="17.5" textLength="118.8" lengthAdjust="spacingAndGlyphs" fill="#767676" stroke="#ffffff" stroke-width="0.35">4 002 529,00 €</text>
<text x="621" y="407.6" font-size="17.5" textLength="128.5" lengthAdjust="spacingAndGlyphs" font-weight="bold" fill="#0070c0">24 223 733,00 €</text>
<text x="480.7" y="431.6" font-size="17.5" textLength="118.8" lengthAdjust="spacingAndGlyphs" fill="#767676" stroke="#ffffff" stroke-width="0.35">4 513 043,00 €</text>
<text x="621" y="431.6" font-size="17.5" textLength="128.5" lengthAdjust="spacingAndGlyphs" font-weight="bold" fill="#0070c0">28 424 592,00 €</text>
<text x="471.7" y="455.6" font-size="17.5" textLength="127.8" lengthAdjust="spacingAndGlyphs" fill="#767676" stroke="#ffffff" stroke-width="0.35">14 035 320,20 €</text>
<text x="621" y="455.6" font-size="17.5" textLength="128.5" lengthAdjust="spacingAndGlyphs" font-weight="bold" fill="#0070c0">46 607 860,20 €</text>
<text x="470.9" y="478.7" font-size="17.5" textLength="128.7" lengthAdjust="spacingAndGlyphs" font-weight="bold" fill="#0070c0">31 120 516,20 €</text>
<defs><clipPath id="dcl"><rect x="457.5" y="320" width="7" height="170"/></clipPath></defs><g clip-path="url(#dcl)">
<text x="462.5" y="335.6" font-size="17.5" fill="#767676" text-anchor="end" stroke="#ffffff" stroke-width="0.18">€</text>
<text x="462.5" y="359.6" font-size="17.5" fill="#767676" text-anchor="end" stroke="#ffffff" stroke-width="0.18">€</text>
<text x="462.5" y="383.6" font-size="17.5" fill="#767676" text-anchor="end" stroke="#ffffff" stroke-width="0.18">€</text>
<text x="462.5" y="407.6" font-size="17.5" fill="#767676" text-anchor="end" stroke="#ffffff" stroke-width="0.18">€</text>
<text x="462.5" y="431.6" font-size="17.5" fill="#767676" text-anchor="end" stroke="#ffffff" stroke-width="0.18">€</text>
<text x="462.5" y="455.6" font-size="17.5" fill="#767676" text-anchor="end" stroke="#ffffff" stroke-width="0.18">€</text>
<text x="462.5" y="478.7" font-size="17.5" font-weight="bold" fill="#0070c0" text-anchor="end">€</text>
</g>
<text x="611.8" y="478.7" font-size="17.5" textLength="137.7" lengthAdjust="spacingAndGlyphs" font-weight="bold" fill="#0070c0">157 276 731,20 €</text>
<path d="M440 365.3H465V388.5" fill="none" stroke="#217346" stroke-width="2"/>
<rect x="462.3" y="387.3" width="4.5" height="4.5" fill="#217346"/>
<rect x="857" y="268.7" width="666.5" height="333.3" fill="#ffffff" stroke="#0f6fc6" stroke-width="2"/>
<text x="960.2" y="529.5" font-size="13.5" textLength="36.5" lengthAdjust="spacingAndGlyphs" fill="#595959" text-anchor="end" stroke="#ffffff" stroke-width="0.18">0,00 €</text>
<text x="960.2" y="502.99" font-size="13.5" textLength="85.5" lengthAdjust="spacingAndGlyphs" fill="#595959" text-anchor="end" stroke="#ffffff" stroke-width="0.18">2000 000,00 €</text>
<text x="960.2" y="476.48" font-size="13.5" textLength="85.5" lengthAdjust="spacingAndGlyphs" fill="#595959" text-anchor="end" stroke="#ffffff" stroke-width="0.18">4000 000,00 €</text>
<text x="960.2" y="449.97" font-size="13.5" textLength="85.5" lengthAdjust="spacingAndGlyphs" fill="#595959" text-anchor="end" stroke="#ffffff" stroke-width="0.18">6000 000,00 €</text>
<text x="960.2" y="423.46" font-size="13.5" textLength="85.5" lengthAdjust="spacingAndGlyphs" fill="#595959" text-anchor="end" stroke="#ffffff" stroke-width="0.18">8000 000,00 €</text>
<text x="960.2" y="396.95" font-size="13.5" textLength="92.4" lengthAdjust="spacingAndGlyphs" fill="#595959" text-anchor="end" stroke="#ffffff" stroke-width="0.18">10000 000,00 €</text>
<text x="960.2" y="370.44" font-size="13.5" textLength="92.4" lengthAdjust="spacingAndGlyphs" fill="#595959" text-anchor="end" stroke="#ffffff" stroke-width="0.18">12000 000,00 €</text>
<text x="960.2" y="343.92999999999995" font-size="13.5" textLength="92.4" lengthAdjust="spacingAndGlyphs" fill="#595959" text-anchor="end" stroke="#ffffff" stroke-width="0.18">14000 000,00 €</text>
<text x="960.2" y="317.41999999999996" font-size="13.5" textLength="92.4" lengthAdjust="spacingAndGlyphs" fill="#595959" text-anchor="end" stroke="#ffffff" stroke-width="0.18">16000 000,00 €</text>
<text x="960.2" y="290.90999999999997" font-size="13.5" textLength="92.4" lengthAdjust="spacingAndGlyphs" fill="#595959" text-anchor="end" stroke="#ffffff" stroke-width="0.18">18000 000,00 €</text>
<line x1="974.5" y1="525.5" x2="1505.5" y2="525.5" stroke="#d9d9d9" stroke-width="1" />
<rect x="992.2" y="413.8" width="15.5" height="111.19999999999999" fill="#e97132"/>
<rect x="1011.4000000000001" y="422.1" width="15.5" height="102.89999999999998" fill="#196b24"/>
<rect x="1030.8" y="493.8" width="15.5" height="31.19999999999999" fill="#0f9ed5"/>
<text x="1019.2" y="548.7" font-size="13.5" fill="#595959" text-anchor="middle" stroke="#ffffff" stroke-width="0.18">2019</text>
<rect x="1080.5" y="428.9" width="15.5" height="96.10000000000002" fill="#e97132"/>
<rect x="1099.7" y="434.6" width="15.5" height="90.39999999999998" fill="#196b24"/>
<rect x="1119.1" y="494.8" width="15.5" height="30.19999999999999" fill="#0f9ed5"/>
<text x="1107.5" y="548.7" font-size="13.5" fill="#595959" text-anchor="middle" stroke="#ffffff" stroke-width="0.18">2020</text>
<rect x="1168.8" y="408" width="15.5" height="117" fill="#e97132"/>
<rect x="1188.0" y="390.9" width="15.5" height="134.10000000000002" fill="#196b24"/>
<rect x="1207.3999999999999" y="475.1" width="15.5" height="49.89999999999998" fill="#0f9ed5"/>
<text x="1195.8" y="548.7" font-size="13.5" fill="#595959" text-anchor="middle" stroke="#ffffff" stroke-width="0.18">2021</text>
<rect x="1257.1" y="400" width="15.5" height="125" fill="#e97132"/>
<rect x="1276.3" y="384.1" width="15.5" height="140.89999999999998" fill="#196b24"/>
<rect x="1295.6999999999998" y="473.1" width="15.5" height="51.89999999999998" fill="#0f9ed5"/>
<text x="1284.1" y="548.7" font-size="13.5" fill="#595959" text-anchor="middle" stroke="#ffffff" stroke-width="0.18">2022</text>
<rect x="1345.4" y="385" width="15.5" height="140" fill="#e97132"/>
<rect x="1364.6000000000001" y="350" width="15.5" height="175" fill="#196b24"/>
<rect x="1384.0" y="466" width="15.5" height="59" fill="#0f9ed5"/>
<text x="1372.4" y="548.7" font-size="13.5" fill="#595959" text-anchor="middle" stroke="#ffffff" stroke-width="0.18">2023</text>
<rect x="1433.7" y="311.8" width="15.5" height="213.2" fill="#e97132"/>
<rect x="1452.9" y="307.9" width="15.5" height="217.10000000000002" fill="#196b24"/>
<rect x="1472.3" y="340" width="15.5" height="185" fill="#0f9ed5"/>
<text x="1460.7" y="548.7" font-size="13.5" fill="#595959" text-anchor="middle" stroke="#ffffff" stroke-width="0.18">2024</text>
<rect x="1003.2" y="573.7" width="7.8" height="8" fill="#e97132"/>
<text x="1014.9" y="581.6" font-size="13.5" textLength="73.4" lengthAdjust="spacingAndGlyphs" fill="#595959" stroke="#ffffff" stroke-width="0.18">ETI Pipe brut</text>
<rect x="1112" y="573.7" width="7.8" height="8" fill="#196b24"/>
<text x="1123.2" y="581.6" font-size="13.5" textLength="143.8" lengthAdjust="spacingAndGlyphs" fill="#595959" stroke="#ffffff" stroke-width="0.18">Grand Compte Pipe brut</text>
<rect x="1289.6" y="573.7" width="7.8" height="8" fill="#0f9ed5"/>
<text x="1301.5" y="581.6" font-size="13.5" textLength="81.5" lengthAdjust="spacingAndGlyphs" fill="#595959" stroke="#ffffff" stroke-width="0.18">PME Pipe brut</text>
<rect x="24" y="156" width="433" height="634" fill="#000000" rx="6" filter="url(#dsh)" opacity="0.13"/>
<rect x="21.5" y="151.5" width="436" height="636.5" fill="#ffffff" stroke="#606060" stroke-width="1" rx="4.5"/>
<rect x="435.5" y="152.5" width="21.5" height="547.5" fill="#f3f3f3"/>
<path d="M440 167.6L445.5 159.3L451 167.6Z" fill="#707070" stroke="#707070" stroke-width="1.2" stroke-linejoin="round"/>
<rect x="440" y="174" width="11" height="303.7" fill="#737373"/>
<path d="M440 685.5L445.5 693.8L451 685.5Z" fill="#707070" stroke="#707070" stroke-width="1.2" stroke-linejoin="round"/>
<text x="40.8" y="176.5" font-size="14.5" textLength="87" lengthAdjust="spacingAndGlyphs" font-weight="bold" fill="#1f1f1f">Personnalisé</text>
<line x1="23.5" y1="291.5" x2="434.5" y2="291.5" stroke="#dcdcdc" stroke-width="1" />
<text x="40.2" y="316.5" font-size="14.5" textLength="41.5" lengthAdjust="spacingAndGlyphs" font-weight="bold" fill="#1f1f1f">Office</text>
<rect x="23.5" y="330.5" width="102" height="89" fill="#f3f3f3" stroke="#d0d0d0" stroke-width="1"/>
<defs><clipPath id="cl34_195"><rect x="34" y="195" width="80" height="60"/></clipPath></defs>
<g clip-path="url(#cl34_195)">
<rect x="34.5" y="195.5" width="79" height="59" fill="#ffffff" stroke="#44546a" stroke-width="1"/>
<rect x="36" y="197" width="76" height="56" fill="#ffffff"/>
<rect x="89" y="197" width="23" height="56" fill="#4f4d6b"/>
<path d="M36.5 197.5H88.5L97.5 206.5V252.5H36.5Z" fill="#ffffff" stroke="#b9c3d3" stroke-width="0.8"/>
<path d="M97.5 206.5V252.5H36.5" fill="none" stroke="#44546a" stroke-width="0.9"/>
<path d="M88.5 197.5V206.5H97.5Z" fill="#f2f4f8" stroke="#7d8aa0" stroke-width="0.7"/>
<text x="42.4" y="225.6" font-size="25.5" textLength="35.9" lengthAdjust="spacingAndGlyphs" fill="#1f1f4f" style="font-family:&quot;Liberation Sans&quot;" stroke="#ffffff" stroke-width="0.25">Aa</text>
<rect x="82.8" y="222.8" width="9.900000000000006" height="2.9" fill="#d9d9d9"/>
<rect x="41" y="227.8" width="50.8" height="2.9" fill="#d9d9d9"/>
<rect x="41" y="232.8" width="50.8" height="2.9" fill="#d9d9d9"/>
<rect x="41" y="240.9" width="7.8" height="5.8" fill="#1a8cff"/>
<rect x="50" y="240.9" width="7.8" height="5.8" fill="#5ec4b6"/>
<rect x="59" y="240.9" width="7.8" height="5.8" fill="#e06666"/>
<rect x="68" y="240.9" width="7.8" height="5.8" fill="#f2b35e"/>
<rect x="77" y="240.9" width="7.8" height="5.8" fill="#b3d9ff"/>
<rect x="86" y="240.9" width="7.8" height="5.8" fill="#8a94aa"/>
</g>
<defs><clipPath id="cl137_195"><rect x="137" y="195" width="80" height="60"/></clipPath></defs>
<g clip-path="url(#cl137_195)">
<rect x="137.5" y="195.5" width="79" height="59" fill="#ffffff" stroke="#44546a" stroke-width="1"/>
<rect x="139" y="197" width="76" height="56" fill="#ffffff"/>
<rect x="192" y="197" width="23" height="56" fill="#d9d5d2"/>
<path d="M139.5 197.5H191.5L200.5 206.5V252.5H139.5Z" fill="#ffffff" stroke="#b9c3d3" stroke-width="0.8"/>
<path d="M200.5 206.5V252.5H139.5" fill="none" stroke="#44546a" stroke-width="0.9"/>
<path d="M191.5 197.5V206.5H200.5Z" fill="#f2f4f8" stroke="#7d8aa0" stroke-width="0.7"/>
<text x="145.4" y="225.6" font-size="25.5" textLength="35.5" lengthAdjust="spacingAndGlyphs" fill="#c8c5c3" style="font-family:&quot;Liberation Sans&quot;" stroke="#ffffff" stroke-width="0.25">Aa</text>
<rect x="185.4" y="222.8" width="10.300000000000004" height="2.9" fill="#d9d9d9"/>
<rect x="144" y="227.8" width="50.8" height="2.9" fill="#d9d9d9"/>
<rect x="144" y="232.8" width="50.8" height="2.9" fill="#d9d9d9"/>
<rect x="144" y="240.9" width="7.8" height="5.8" fill="#6b7580"/>
<rect x="153" y="240.9" width="7.8" height="5.8" fill="#0a6bbd"/>
<rect x="162" y="240.9" width="7.8" height="5.8" fill="#3f6a8a"/>
<rect x="171" y="240.9" width="7.8" height="5.8" fill="#0d3a5e"/>
<rect x="180" y="240.9" width="7.8" height="5.8" fill="#a6e0d8"/>
<rect x="189" y="240.9" width="7.8" height="5.8" fill="#139e9a"/>
</g>
<text x="28.5" y="270.6" font-size="15" textLength="90.4" lengthAdjust="spacingAndGlyphs" fill="#262626" stroke="#ffffff" stroke-width="0.18">ThèmeMyRe...</text>
<text x="177" y="270.6" font-size="15" textLength="64.5" lengthAdjust="spacingAndGlyphs" fill="#262626" text-anchor="middle" stroke="#ffffff" stroke-width="0.18">ThèmeRO</text>
<defs><clipPath id="cl34_335"><rect x="34" y="335" width="80" height="60"/></clipPath></defs>
<g clip-path="url(#cl34_335)">
<rect x="34.5" y="335.5" width="79" height="59" fill="#ffffff" stroke="#44546a" stroke-width="1"/>
<rect x="36" y="337" width="76" height="56" fill="#ffffff"/>
<rect x="89" y="337" width="23" height="56" fill="#475467"/>
<path d="M36.5 337.5H88.5L97.5 346.5V392.5H36.5Z" fill="#ffffff" stroke="#b9c3d3" stroke-width="0.8"/>
<path d="M97.5 346.5V392.5H36.5" fill="none" stroke="#44546a" stroke-width="0.9"/>
<path d="M88.5 337.5V346.5H97.5Z" fill="#f2f4f8" stroke="#7d8aa0" stroke-width="0.7"/>
<text x="42.4" y="365.6" font-size="25.5" textLength="27.2" lengthAdjust="spacingAndGlyphs" fill="#0e2841" style="font-family:&quot;Liberation Sans&quot;" stroke="#ffffff" stroke-width="0.17">Aa</text>
<rect x="75" y="362.8" width="17.700000000000003" height="2.9" fill="#d9d9d9"/>
<rect x="41" y="367.8" width="50.8" height="2.9" fill="#d9d9d9"/>
<rect x="41" y="372.8" width="50.8" height="2.9" fill="#d9d9d9"/>
<rect x="41" y="380.9" width="7.8" height="5.8" fill="#156082"/>
<rect x="50" y="380.9" width="7.8" height="5.8" fill="#e97132"/>
<rect x="59" y="380.9" width="7.8" height="5.8" fill="#196b24"/>
<rect x="68" y="380.9" width="7.8" height="5.8" fill="#0f9ed5"/>
<rect x="77" y="380.9" width="7.8" height="5.8" fill="#a02b93"/>
<rect x="86" y="380.9" width="7.8" height="5.8" fill="#4ea72e"/>
</g>
<text x="54.3" y="410.6" font-size="15" textLength="38.8" lengthAdjust="spacingAndGlyphs" fill="#262626" stroke="#f3f3f3" stroke-width="0.18">Office</text>
<defs><clipPath id="cl137_335"><rect x="137" y="335" width="80" height="60"/></clipPath></defs>
<g clip-path="url(#cl137_335)">
<rect x="137.5" y="335.5" width="79" height="59" fill="#ffffff" stroke="#44546a" stroke-width="1"/>
<rect x="139" y="337" width="76" height="56" fill="#ffffff"/>
<rect x="192" y="337" width="23" height="56" fill="#5a6a85"/>
<path d="M139.5 337.5H191.5L200.5 346.5V392.5H139.5Z" fill="#ffffff" stroke="#b9c3d3" stroke-width="0.8"/>
<path d="M200.5 346.5V392.5H139.5" fill="none" stroke="#44546a" stroke-width="0.9"/>
<path d="M191.5 337.5V346.5H200.5Z" fill="#f2f4f8" stroke="#7d8aa0" stroke-width="0.7"/>
<text x="145.4" y="365.6" font-size="25.5" textLength="26.5" lengthAdjust="spacingAndGlyphs" fill="#44546a" style="font-family:&quot;Liberation Sans&quot;" stroke="#ffffff" stroke-width="0.25">Aa</text>
<rect x="178" y="362.8" width="17.700000000000003" height="2.9" fill="#d9d9d9"/>
<rect x="144" y="367.8" width="50.8" height="2.9" fill="#d9d9d9"/>
<rect x="144" y="372.8" width="50.8" height="2.9" fill="#d9d9d9"/>
<rect x="144" y="380.9" width="7.8" height="5.8" fill="#4472c4"/>
<rect x="153" y="380.9" width="7.8" height="5.8" fill="#ed7d31"/>
<rect x="162" y="380.9" width="7.8" height="5.8" fill="#a5a5a5"/>
<rect x="171" y="380.9" width="7.8" height="5.8" fill="#ffc000"/>
<rect x="180" y="380.9" width="7.8" height="5.8" fill="#5b9bd5"/>
<rect x="189" y="380.9" width="7.8" height="5.8" fill="#70ad47"/>
</g>
<text x="137.4" y="410.6" font-size="15" textLength="78.7" lengthAdjust="spacingAndGlyphs" fill="#262626" stroke="#ffffff" stroke-width="0.18">Thème Off...</text>
<defs><clipPath id="cl240_335"><rect x="240" y="335" width="80" height="60"/></clipPath></defs>
<g clip-path="url(#cl240_335)">
<rect x="240.5" y="335.5" width="79" height="59" fill="#ffffff" stroke="#44546a" stroke-width="1"/>
<rect x="242" y="337" width="76" height="56" fill="#ffffff"/>
<defs><linearGradient id="gbrin" x1="0" y1="0" x2="1" y2="0"><stop offset="0" stop-color="#f4f6e6"/><stop offset="1" stop-color="#d8deb4"/></linearGradient></defs><rect x="295" y="337" width="23" height="56" fill="url(#gbrin)"/>
<path d="M242.5 337.5H294.5L303.5 346.5V392.5H242.5Z" fill="#ffffff" stroke="#b9c3d3" stroke-width="0.8"/>
<path d="M303.5 346.5V392.5H242.5" fill="none" stroke="#44546a" stroke-width="0.9"/>
<path d="M294.5 337.5V346.5H303.5Z" fill="#f2f4f8" stroke="#7d8aa0" stroke-width="0.7"/>
<text x="248.4" y="365.6" font-size="25.5" textLength="36.1" lengthAdjust="spacingAndGlyphs" fill="#756b4a" style="font-family:&quot;Liberation Sans&quot;" stroke="#ffffff" stroke-width="0.25">Aa</text>
<rect x="289.0" y="362.8" width="9.700000000000003" height="2.9" fill="#d9d9d9"/>
<rect x="247" y="367.8" width="50.8" height="2.9" fill="#d9d9d9"/>
<rect x="247" y="372.8" width="50.8" height="2.9" fill="#d9d9d9"/>
<rect x="247" y="380.9" width="7.8" height="5.8" fill="#a5300f"/>
<rect x="256" y="380.9" width="7.8" height="5.8" fill="#d55816"/>
<rect x="265" y="380.9" width="7.8" height="5.8" fill="#9c7c4d"/>
<rect x="274" y="380.9" width="7.8" height="5.8" fill="#6b7d52"/>
<rect x="283" y="380.9" width="7.8" height="5.8" fill="#8fa84a"/>
<rect x="292" y="380.9" width="7.8" height="5.8" fill="#6aa890"/>
</g>
<text x="267.3" y="410.6" font-size="15" textLength="25.2" lengthAdjust="spacingAndGlyphs" fill="#262626" stroke="#ffffff" stroke-width="0.18">Brin</text>
<defs><clipPath id="cl343_335"><rect x="343" y="335" width="80" height="60"/></clipPath></defs>
<g clip-path="url(#cl343_335)">
<rect x="343.5" y="335.5" width="79" height="59" fill="#ffffff" stroke="#44546a" stroke-width="1"/>
<rect x="345" y="337" width="76" height="56" fill="#ffffff"/>
<defs><linearGradient id="gfac" x1="0" y1="0" x2="1" y2="0"><stop offset="0" stop-color="#4f8c3a"/><stop offset="1" stop-color="#8fc43c"/></linearGradient></defs><rect x="398" y="337" width="23" height="56" fill="url(#gfac)"/>
<path d="M345.5 337.5H397.5L406.5 346.5V392.5H345.5Z" fill="#ffffff" stroke="#b9c3d3" stroke-width="0.8"/>
<path d="M406.5 346.5V392.5H345.5" fill="none" stroke="#44546a" stroke-width="0.9"/>
<path d="M397.5 337.5V346.5H406.5Z" fill="#f2f4f8" stroke="#7d8aa0" stroke-width="0.7"/>
<text x="351.4" y="365.6" font-size="25.5" textLength="28.9" lengthAdjust="spacingAndGlyphs" fill="#1e3a48" style="font-family:&quot;Liberation Sans&quot;" stroke="#1e3a48" stroke-width="0.44">Aa</text>
<rect x="384.8" y="362.8" width="16.900000000000006" height="2.9" fill="#d9d9d9"/>
<rect x="350" y="367.8" width="50.8" height="2.9" fill="#d9d9d9"/>
<rect x="350" y="372.8" width="50.8" height="2.9" fill="#d9d9d9"/>
<rect x="350" y="380.9" width="7.8" height="5.8" fill="#90c226"/>
<rect x="359" y="380.9" width="7.8" height="5.8" fill="#54a021"/>
<rect x="368" y="380.9" width="7.8" height="5.8" fill="#e6b91e"/>
<rect x="377" y="380.9" width="7.8" height="5.8" fill="#e76618"/>
<rect x="386" y="380.9" width="7.8" height="5.8" fill="#c42f1a"/>
<rect x="395" y="380.9" width="7.8" height="5.8" fill="#918655"/>
</g>
<text x="359.1" y="410.6" font-size="15" textLength="47.3" lengthAdjust="spacingAndGlyphs" fill="#262626" stroke="#ffffff" stroke-width="0.18">Facette</text>
<defs><clipPath id="cl34_425"><rect x="34" y="425" width="80" height="60"/></clipPath></defs>
<g clip-path="url(#cl34_425)">
<rect x="34.5" y="425.5" width="79" height="59" fill="#ffffff" stroke="#44546a" stroke-width="1"/>
<rect x="36" y="427" width="76" height="56" fill="#ffffff"/>
<defs><linearGradient id="ggal" x1="0" y1="0" x2="1" y2="0"><stop offset="0" stop-color="#ece8e4"/><stop offset="1" stop-color="#ddd6d0"/></linearGradient></defs><rect x="89" y="427" width="23" height="56" fill="url(#ggal)"/><rect x="97" y="476" width="15" height="7" fill="#7d5c34"/>
<path d="M36.5 427.5H88.5L97.5 436.5V482.5H36.5Z" fill="#ffffff" stroke="#b9c3d3" stroke-width="0.8"/>
<path d="M97.5 436.5V482.5H36.5" fill="none" stroke="#44546a" stroke-width="0.9"/>
<path d="M88.5 427.5V436.5H97.5Z" fill="#f2f4f8" stroke="#7d8aa0" stroke-width="0.7"/>
<text x="42.4" y="455.6" font-size="25.5" textLength="28.9" lengthAdjust="spacingAndGlyphs" fill="#404040" style="font-family:&quot;Liberation Sans&quot;">Aa</text>
<rect x="75.8" y="452.8" width="16.900000000000006" height="2.9" fill="#d9d9d9"/>
<rect x="41" y="457.8" width="50.8" height="2.9" fill="#d9d9d9"/>
<rect x="41" y="462.8" width="50.8" height="2.9" fill="#d9d9d9"/>
<rect x="41" y="470.9" width="7.8" height="5.8" fill="#b71e42"/>
<rect x="50" y="470.9" width="7.8" height="5.8" fill="#de478e"/>
<rect x="59" y="470.9" width="7.8" height="5.8" fill="#bc72f0"/>
<rect x="68" y="470.9" width="7.8" height="5.8" fill="#795faf"/>
<rect x="77" y="470.9" width="7.8" height="5.8" fill="#586eb9"/>
<rect x="86" y="470.9" width="7.8" height="5.8" fill="#6892a0"/>
</g>
<text x="50.4" y="500.6" font-size="15" textLength="46.1" lengthAdjust="spacingAndGlyphs" fill="#262626" stroke="#ffffff" stroke-width="0.18">Galerie</text>
<defs><clipPath id="cl137_425"><rect x="137" y="425" width="80" height="60"/></clipPath></defs>
<g clip-path="url(#cl137_425)">
<rect x="137.5" y="425.5" width="79" height="59" fill="#ffffff" stroke="#44546a" stroke-width="1"/>
<rect x="139" y="427" width="76" height="56" fill="#ffffff"/>
<defs><pattern id="pint" x="194" y="427" width="7" height="7" patternUnits="userSpaceOnUse"><rect width="7" height="7" fill="#2f8fc6"/><path d="M3.5 0.5L6.5 3.5L3.5 6.5L0.5 3.5Z" fill="#9ed2ef"/><circle cx="3.5" cy="3.5" r="1.2" fill="#ffffff"/></pattern></defs><rect x="194" y="427" width="21" height="37" fill="url(#pint)"/>
<path d="M139.5 427.5H191.5L200.5 436.5V482.5H139.5Z" fill="#ffffff" stroke="#b9c3d3" stroke-width="0.8"/>
<path d="M200.5 436.5V482.5H139.5" fill="none" stroke="#44546a" stroke-width="0.9"/>
<path d="M191.5 427.5V436.5H200.5Z" fill="#f2f4f8" stroke="#7d8aa0" stroke-width="0.7"/>
<text x="145.4" y="455.6" font-size="25.5" textLength="23.4" lengthAdjust="spacingAndGlyphs" font-weight="bold" fill="#335b74" style="font-family:&quot;Liberation Sans&quot;">Aa</text>
<rect x="178" y="452.8" width="17.700000000000003" height="2.9" fill="#d9d9d9"/>
<rect x="144" y="457.8" width="50.8" height="2.9" fill="#d9d9d9"/>
<rect x="144" y="462.8" width="50.8" height="2.9" fill="#d9d9d9"/>
<rect x="144" y="470.9" width="7.8" height="5.8" fill="#1cade4"/>
<rect x="153" y="470.9" width="7.8" height="5.8" fill="#2683c6"/>
<rect x="162" y="470.9" width="7.8" height="5.8" fill="#27ced7"/>
<rect x="171" y="470.9" width="7.8" height="5.8" fill="#42ba97"/>
<rect x="180" y="470.9" width="7.8" height="5.8" fill="#3e8853"/>
<rect x="189" y="470.9" width="7.8" height="5.8" fill="#62a39f"/>
</g>
<text x="151.2" y="500.6" font-size="15" textLength="49.7" lengthAdjust="spacingAndGlyphs" fill="#262626" stroke="#ffffff" stroke-width="0.18">Intégral</text>
<defs><clipPath id="cl240_425"><rect x="240" y="425" width="80" height="60"/></clipPath></defs>
<g clip-path="url(#cl240_425)">
<rect x="240.5" y="425.5" width="79" height="59" fill="#ffffff" stroke="#44546a" stroke-width="1"/>
<rect x="242" y="427" width="76" height="56" fill="#ffffff"/>
<rect x="295" y="427" width="23" height="56" fill="#17404e"/><rect x="307" y="427" width="3.5" height="8" fill="#c00000"/>
<path d="M242.5 427.5H294.5L303.5 436.5V482.5H242.5Z" fill="#ffffff" stroke="#b9c3d3" stroke-width="0.8"/>
<path d="M303.5 436.5V482.5H242.5" fill="none" stroke="#44546a" stroke-width="0.9"/>
<path d="M294.5 427.5V436.5H303.5Z" fill="#f2f4f8" stroke="#7d8aa0" stroke-width="0.7"/>
<text x="248.4" y="455.6" font-size="25.5" textLength="36.1" lengthAdjust="spacingAndGlyphs" fill="#1e5155" style="font-family:&quot;Liberation Sans&quot;" stroke="#ffffff" stroke-width="0.25">Aa</text>
<rect x="289.0" y="452.8" width="9.700000000000003" height="2.9" fill="#d9d9d9"/>
<rect x="247" y="457.8" width="50.8" height="2.9" fill="#d9d9d9"/>
<rect x="247" y="462.8" width="50.8" height="2.9" fill="#d9d9d9"/>
<rect x="247" y="470.9" width="7.8" height="5.8" fill="#b01513"/>
<rect x="256" y="470.9" width="7.8" height="5.8" fill="#ea6312"/>
<rect x="265" y="470.9" width="7.8" height="5.8" fill="#e6b729"/>
<rect x="274" y="470.9" width="7.8" height="5.8" fill="#6aac90"/>
<rect x="283" y="470.9" width="7.8" height="5.8" fill="#5f9c9d"/>
<rect x="292" y="470.9" width="7.8" height="5.8" fill="#9e5e9b"/>
</g>
<text x="269.3" y="500.6" font-size="15" textLength="20.5" lengthAdjust="spacingAndGlyphs" fill="#262626" stroke="#ffffff" stroke-width="0.18">Ion</text>
<defs><clipPath id="cl343_425"><rect x="343" y="425" width="80" height="60"/></clipPath></defs>
<g clip-path="url(#cl343_425)">
<rect x="343.5" y="425.5" width="79" height="59" fill="#ffffff" stroke="#44546a" stroke-width="1"/>
<rect x="345" y="427" width="76" height="56" fill="#ffffff"/>
<rect x="398" y="427" width="23" height="56" fill="#e2bd80"/><rect x="406" y="453" width="15" height="4" fill="#3a3020"/>
<path d="M345.5 427.5H397.5L406.5 436.5V482.5H345.5Z" fill="#ffffff" stroke="#b9c3d3" stroke-width="0.8"/>
<path d="M406.5 436.5V482.5H345.5" fill="none" stroke="#44546a" stroke-width="0.9"/>
<path d="M397.5 427.5V436.5H406.5Z" fill="#f2f4f8" stroke="#7d8aa0" stroke-width="0.7"/>
<text x="351.4" y="455.6" font-size="25.5" textLength="28.9" lengthAdjust="spacingAndGlyphs" fill="#2c2c2c" style="font-family:&quot;Liberation Serif&quot;" stroke="#ffffff" stroke-width="0.17">Aa</text>
<rect x="384.8" y="452.8" width="16.900000000000006" height="2.9" fill="#d9d9d9"/>
<rect x="350" y="457.8" width="50.8" height="2.9" fill="#d9d9d9"/>
<rect x="350" y="462.8" width="50.8" height="2.9" fill="#d9d9d9"/>
<rect x="350" y="470.9" width="7.8" height="5.8" fill="#83992a"/>
<rect x="359" y="470.9" width="7.8" height="5.8" fill="#3c9770"/>
<rect x="368" y="470.9" width="7.8" height="5.8" fill="#44709d"/>
<rect x="377" y="470.9" width="7.8" height="5.8" fill="#a23c33"/>
<rect x="386" y="470.9" width="7.8" height="5.8" fill="#d97828"/>
<rect x="395" y="470.9" width="7.8" height="5.8" fill="#deb340"/>
</g>
<text x="348.5" y="500.6" font-size="15" textLength="69.1" lengthAdjust="spacingAndGlyphs" fill="#262626" stroke="#ffffff" stroke-width="0.18">Organique</text>
<defs><clipPath id="cl34_515"><rect x="34" y="515" width="80" height="60"/></clipPath></defs>
<g clip-path="url(#cl34_515)">
<rect x="34.5" y="515.5" width="79" height="59" fill="#ffffff" stroke="#44546a" stroke-width="1"/>
<rect x="36" y="517" width="76" height="56" fill="#ffffff"/>
<rect x="97" y="568" width="15" height="5" fill="#d0601a"/>
<path d="M36.5 517.5H88.5L97.5 526.5V572.5H36.5Z" fill="#ffffff" stroke="#b9c3d3" stroke-width="0.8"/>
<path d="M97.5 526.5V572.5H36.5" fill="none" stroke="#44546a" stroke-width="0.9"/>
<path d="M88.5 517.5V526.5H97.5Z" fill="#f2f4f8" stroke="#7d8aa0" stroke-width="0.7"/>
<text x="42.4" y="545.6" font-size="25.5" textLength="27" lengthAdjust="spacingAndGlyphs" fill="#637052" style="font-family:&quot;Liberation Sans&quot;" stroke="#ffffff" stroke-width="0.25">Aa</text>
<rect x="75" y="542.8" width="17.700000000000003" height="2.9" fill="#d9d9d9"/>
<rect x="41" y="547.8" width="50.8" height="2.9" fill="#d9d9d9"/>
<rect x="41" y="552.8" width="50.8" height="2.9" fill="#d9d9d9"/>
<rect x="41" y="560.9" width="7.8" height="5.8" fill="#e48312"/>
<rect x="50" y="560.9" width="7.8" height="5.8" fill="#bd582c"/>
<rect x="59" y="560.9" width="7.8" height="5.8" fill="#865640"/>
<rect x="68" y="560.9" width="7.8" height="5.8" fill="#9b8357"/>
<rect x="77" y="560.9" width="7.8" height="5.8" fill="#c2bc80"/>
<rect x="86" y="560.9" width="7.8" height="5.8" fill="#94a088"/>
</g>
<text x="36" y="590.6" font-size="15" textLength="74.9" lengthAdjust="spacingAndGlyphs" fill="#262626" stroke="#ffffff" stroke-width="0.18">Rétrospec...</text>
<defs><clipPath id="cl137_515"><rect x="137" y="515" width="80" height="60"/></clipPath></defs>
<g clip-path="url(#cl137_515)">
<rect x="137.5" y="515.5" width="79" height="59" fill="#ffffff" stroke="#44546a" stroke-width="1"/>
<rect x="139" y="517" width="76" height="56" fill="#ffffff"/>
<rect x="199" y="521" width="12" height="50" fill="#3a1f4a"/><rect x="203" y="517" width="3" height="8" fill="#c0307a"/>
<path d="M139.5 517.5H191.5L200.5 526.5V572.5H139.5Z" fill="#ffffff" stroke="#b9c3d3" stroke-width="0.8"/>
<path d="M200.5 526.5V572.5H139.5" fill="none" stroke="#44546a" stroke-width="0.9"/>
<path d="M191.5 517.5V526.5H200.5Z" fill="#f2f4f8" stroke="#7d8aa0" stroke-width="0.7"/>
<text x="145.4" y="545.6" font-size="25.5" textLength="36.1" lengthAdjust="spacingAndGlyphs" fill="#3a2a5e" style="font-family:&quot;Liberation Sans&quot;" stroke="#ffffff" stroke-width="0.25">Aa</text>
<rect x="186.0" y="542.8" width="9.700000000000003" height="2.9" fill="#d9d9d9"/>
<rect x="144" y="547.8" width="50.8" height="2.9" fill="#d9d9d9"/>
<rect x="144" y="552.8" width="50.8" height="2.9" fill="#d9d9d9"/>
<rect x="144" y="560.9" width="7.8" height="5.8" fill="#b31166"/>
<rect x="153" y="560.9" width="7.8" height="5.8" fill="#e33d6f"/>
<rect x="162" y="560.9" width="7.8" height="5.8" fill="#e45f3c"/>
<rect x="171" y="560.9" width="7.8" height="5.8" fill="#e9943a"/>
<rect x="180" y="560.9" width="7.8" height="5.8" fill="#9b6bf2"/>
<rect x="189" y="560.9" width="7.8" height="5.8" fill="#d53dd0"/>
</g>
<text x="139.3" y="590.6" font-size="15" textLength="74.9" lengthAdjust="spacingAndGlyphs" fill="#262626" stroke="#ffffff" stroke-width="0.18">Salle d’ions</text>
<defs><clipPath id="cl240_515"><rect x="240" y="515" width="80" height="60"/></clipPath></defs>
<g clip-path="url(#cl240_515)">
<rect x="240.5" y="515.5" width="79" height="59" fill="#ffffff" stroke="#44546a" stroke-width="1"/>
<rect x="242" y="517" width="76" height="56" fill="#ffffff"/>
<defs><linearGradient id="gsec" x1="0" y1="0" x2="0" y2="1"><stop offset="0" stop-color="#6fd3f2"/><stop offset="1" stop-color="#1f6fa8"/></linearGradient></defs><rect x="295" y="517" width="23" height="56" fill="url(#gsec)"/>
<path d="M242.5 517.5H294.5L303.5 526.5V572.5H242.5Z" fill="#ffffff" stroke="#b9c3d3" stroke-width="0.8"/>
<path d="M303.5 526.5V572.5H242.5" fill="none" stroke="#44546a" stroke-width="0.9"/>
<path d="M294.5 517.5V526.5H303.5Z" fill="#f2f4f8" stroke="#7d8aa0" stroke-width="0.7"/>
<text x="248.4" y="545.6" font-size="25.5" textLength="36.1" lengthAdjust="spacingAndGlyphs" fill="#1f5a8c" style="font-family:&quot;Liberation Sans&quot;" stroke="#ffffff" stroke-width="0.25">Aa</text>
<rect x="289.0" y="542.8" width="9.700000000000003" height="2.9" fill="#d9d9d9"/>
<rect x="247" y="547.8" width="50.8" height="2.9" fill="#d9d9d9"/>
<rect x="247" y="552.8" width="50.8" height="2.9" fill="#d9d9d9"/>
<rect x="247" y="560.9" width="7.8" height="5.8" fill="#052f61"/>
<rect x="256" y="560.9" width="7.8" height="5.8" fill="#a50e82"/>
<rect x="265" y="560.9" width="7.8" height="5.8" fill="#14967c"/>
<rect x="274" y="560.9" width="7.8" height="5.8" fill="#6a9e1f"/>
<rect x="283" y="560.9" width="7.8" height="5.8" fill="#e87d37"/>
<rect x="292" y="560.9" width="7.8" height="5.8" fill="#c62324"/>
</g>
<text x="254.9" y="590.6" font-size="15" textLength="50.4" lengthAdjust="spacingAndGlyphs" fill="#262626" stroke="#ffffff" stroke-width="0.18">Secteur</text>
<defs><clipPath id="cl343_515"><rect x="343" y="515" width="80" height="60"/></clipPath></defs>
<g clip-path="url(#cl343_515)">
<rect x="343.5" y="515.5" width="79" height="59" fill="#ffffff" stroke="#44546a" stroke-width="1"/>
<rect x="345" y="517" width="76" height="56" fill="#ffffff"/>
<rect x="398" y="517" width="23" height="56" fill="#0f9ed5"/><rect x="406" y="534" width="15" height="10" fill="#ffffff"/>
<path d="M345.5 517.5H397.5L406.5 526.5V572.5H345.5Z" fill="#ffffff" stroke="#b9c3d3" stroke-width="0.8"/>
<path d="M406.5 526.5V572.5H345.5" fill="none" stroke="#44546a" stroke-width="0.9"/>
<path d="M397.5 517.5V526.5H406.5Z" fill="#f2f4f8" stroke="#7d8aa0" stroke-width="0.7"/>
<text x="351.4" y="545.6" font-size="25.5" textLength="28.9" lengthAdjust="spacingAndGlyphs" fill="#1aa0dc" style="font-family:&quot;Liberation Sans&quot;" stroke="#ffffff" stroke-width="0.28">Aa</text>
<rect x="384.8" y="542.8" width="16.900000000000006" height="2.9" fill="#d9d9d9"/>
<rect x="350" y="547.8" width="50.8" height="2.9" fill="#d9d9d9"/>
<rect x="350" y="552.8" width="50.8" height="2.9" fill="#d9d9d9"/>
<rect x="350" y="560.9" width="7.8" height="5.8" fill="#ffca08"/>
<rect x="359" y="560.9" width="7.8" height="5.8" fill="#a6cb33"/>
<rect x="368" y="560.9" width="7.8" height="5.8" fill="#15c27a"/>
<rect x="377" y="560.9" width="7.8" height="5.8" fill="#f0508c"/>
<rect x="386" y="560.9" width="7.8" height="5.8" fill="#8e8e8e"/>
<rect x="395" y="560.9" width="7.8" height="5.8" fill="#fd6a11"/>
</g>
<text x="352" y="590.6" font-size="15" textLength="62" lengthAdjust="spacingAndGlyphs" fill="#262626" stroke="#ffffff" stroke-width="0.18">À bandes</text>
<defs><clipPath id="cl34_605"><rect x="34" y="605" width="80" height="60"/></clipPath></defs>
<g clip-path="url(#cl34_605)">
<rect x="34.5" y="605.5" width="79" height="59" fill="#ffffff" stroke="#44546a" stroke-width="1"/>
<rect x="36" y="607" width="76" height="56" fill="#ffffff"/>
<defs><linearGradient id="gard" x1="0" y1="0" x2="1" y2="0"><stop offset="0" stop-color="#3a3a3a"/><stop offset="1" stop-color="#1c1c1c"/></linearGradient></defs><rect x="89" y="607" width="23" height="56" fill="url(#gard)"/>
<path d="M36.5 607.5H88.5L97.5 616.5V662.5H36.5Z" fill="#ffffff" stroke="#b9c3d3" stroke-width="0.8"/>
<path d="M97.5 616.5V662.5H36.5" fill="none" stroke="#44546a" stroke-width="0.9"/>
<path d="M88.5 607.5V616.5H97.5Z" fill="#f2f4f8" stroke="#7d8aa0" stroke-width="0.7"/>
<text x="42.4" y="635.6" font-size="25.5" textLength="33.7" lengthAdjust="spacingAndGlyphs" fill="#222222" style="font-family:&quot;Liberation Serif&quot;">Aa</text>
<rect x="80.6" y="632.8" width="12.100000000000001" height="2.9" fill="#d9d9d9"/>
<rect x="41" y="637.8" width="50.8" height="2.9" fill="#d9d9d9"/>
<rect x="41" y="642.8" width="50.8" height="2.9" fill="#d9d9d9"/>
<rect x="41" y="650.9" width="7.8" height="5.8" fill="#c9461e"/>
<rect x="50" y="650.9" width="7.8" height="5.8" fill="#d6b15f"/>
<rect x="59" y="650.9" width="7.8" height="5.8" fill="#c3883d"/>
<rect x="68" y="650.9" width="7.8" height="5.8" fill="#a78d6d"/>
<rect x="77" y="650.9" width="7.8" height="5.8" fill="#b0584a"/>
<rect x="86" y="650.9" width="7.8" height="5.8" fill="#b3a183"/>
</g>
<text x="47.9" y="680.6" font-size="15" textLength="51.1" lengthAdjust="spacingAndGlyphs" fill="#262626" stroke="#ffffff" stroke-width="0.18">Ardoise</text>
<defs><clipPath id="cl137_605"><rect x="137" y="605" width="80" height="60"/></clipPath></defs>
<g clip-path="url(#cl137_605)">
<rect x="137.5" y="605.5" width="79" height="59" fill="#ffffff" stroke="#44546a" stroke-width="1"/>
<rect x="139" y="607" width="76" height="56" fill="#ffffff"/>
<rect x="192" y="607" width="23" height="56" fill="#f5ae21"/>
<path d="M139.5 607.5H191.5L200.5 616.5V662.5H139.5Z" fill="#ffffff" stroke="#b9c3d3" stroke-width="0.8"/>
<path d="M200.5 616.5V662.5H139.5" fill="none" stroke="#44546a" stroke-width="0.9"/>
<path d="M191.5 607.5V616.5H200.5Z" fill="#f2f4f8" stroke="#7d8aa0" stroke-width="0.7"/>
<text x="145.4" y="635.6" font-size="25.5" textLength="24.6" lengthAdjust="spacingAndGlyphs" font-weight="bold" fill="#2a1a0a" style="font-family:&quot;Liberation Serif&quot;">Aa</text>
<rect x="178" y="632.8" width="17.700000000000003" height="2.9" fill="#d9d9d9"/>
<rect x="144" y="637.8" width="50.8" height="2.9" fill="#d9d9d9"/>
<rect x="144" y="642.8" width="50.8" height="2.9" fill="#d9d9d9"/>
<rect x="144" y="650.9" width="7.8" height="5.8" fill="#f8b323"/>
<rect x="153" y="650.9" width="7.8" height="5.8" fill="#656a59"/>
<rect x="162" y="650.9" width="7.8" height="5.8" fill="#46b2b5"/>
<rect x="171" y="650.9" width="7.8" height="5.8" fill="#8caa7e"/>
<rect x="180" y="650.9" width="7.8" height="5.8" fill="#d36f68"/>
<rect x="189" y="650.9" width="7.8" height="5.8" fill="#826276"/>
</g>
<text x="155.5" y="680.6" font-size="15" textLength="41.8" lengthAdjust="spacingAndGlyphs" fill="#262626" stroke="#ffffff" stroke-width="0.18">Badge</text>
<defs><clipPath id="cl240_605"><rect x="240" y="605" width="80" height="60"/></clipPath></defs>
<g clip-path="url(#cl240_605)">
<rect x="240.5" y="605.5" width="79" height="59" fill="#ffffff" stroke="#44546a" stroke-width="1"/>
<rect x="242" y="607" width="76" height="56" fill="#ffffff"/>
<rect x="295" y="607" width="23" height="56" fill="#a5b52d"/>
<path d="M242.5 607.5H294.5L303.5 616.5V662.5H242.5Z" fill="#ffffff" stroke="#b9c3d3" stroke-width="0.8"/>
<path d="M303.5 616.5V662.5H242.5" fill="none" stroke="#44546a" stroke-width="0.9"/>
<path d="M294.5 607.5V616.5H303.5Z" fill="#f2f4f8" stroke="#7d8aa0" stroke-width="0.7"/>
<text x="248.4" y="635.6" font-size="25.5" textLength="28.9" lengthAdjust="spacingAndGlyphs" fill="#4a4a40" style="font-family:&quot;Liberation Sans&quot;" stroke="#ffffff" stroke-width="0.28">Aa</text>
<rect x="281.8" y="632.8" width="16.900000000000006" height="2.9" fill="#d9d9d9"/>
<rect x="247" y="637.8" width="50.8" height="2.9" fill="#d9d9d9"/>
<rect x="247" y="642.8" width="50.8" height="2.9" fill="#d9d9d9"/>
<rect x="247" y="650.9" width="7.8" height="5.8" fill="#a5b52d"/>
<rect x="256" y="650.9" width="7.8" height="5.8" fill="#e0521c"/>
<rect x="265" y="650.9" width="7.8" height="5.8" fill="#f7a000"/>
<rect x="274" y="650.9" width="7.8" height="5.8" fill="#3a87c0"/>
<rect x="283" y="650.9" width="7.8" height="5.8" fill="#d6d04a"/>
<rect x="292" y="650.9" width="7.8" height="5.8" fill="#8a8a8a"/>
</g>
<text x="264.6" y="680.6" font-size="15" textLength="29.9" lengthAdjust="spacingAndGlyphs" fill="#262626" stroke="#ffffff" stroke-width="0.18">Base</text>
<defs><clipPath id="cl343_605"><rect x="343" y="605" width="80" height="60"/></clipPath></defs>
<g clip-path="url(#cl343_605)">
<rect x="343.5" y="605.5" width="79" height="59" fill="#ffffff" stroke="#44546a" stroke-width="1"/>
<rect x="345" y="607" width="76" height="56" fill="#ffffff"/>
<rect x="398" y="607" width="23" height="56" fill="#9e2a08"/><rect x="406" y="627" width="15" height="10" fill="#e8900f"/>
<path d="M345.5 607.5H397.5L406.5 616.5V662.5H345.5Z" fill="#ffffff" stroke="#b9c3d3" stroke-width="0.8"/>
<path d="M406.5 616.5V662.5H345.5" fill="none" stroke="#44546a" stroke-width="0.9"/>
<path d="M397.5 607.5V616.5H406.5Z" fill="#f2f4f8" stroke="#7d8aa0" stroke-width="0.7"/>
<text x="351.4" y="635.6" font-size="25.5" textLength="28.9" lengthAdjust="spacingAndGlyphs" fill="#a53010" style="font-family:&quot;Liberation Sans&quot;" stroke="#ffffff" stroke-width="0.17">Aa</text>
<rect x="384.8" y="632.8" width="16.900000000000006" height="2.9" fill="#d9d9d9"/>
<rect x="350" y="637.8" width="50.8" height="2.9" fill="#d9d9d9"/>
<rect x="350" y="642.8" width="50.8" height="2.9" fill="#d9d9d9"/>
<rect x="350" y="650.9" width="7.8" height="5.8" fill="#f09415"/>
<rect x="359" y="650.9" width="7.8" height="5.8" fill="#c1b56b"/>
<rect x="368" y="650.9" width="7.8" height="5.8" fill="#4baf73"/>
<rect x="377" y="650.9" width="7.8" height="5.8" fill="#5aa6c0"/>
<rect x="386" y="650.9" width="7.8" height="5.8" fill="#d17df9"/>
<rect x="395" y="650.9" width="7.8" height="5.8" fill="#fa7e5c"/>
</g>
<text x="364.3" y="680.6" font-size="15" textLength="38.1" lengthAdjust="spacingAndGlyphs" fill="#262626" stroke="#ffffff" stroke-width="0.18">Berlin</text>
<defs><clipPath id="r5"><rect x="22" y="694" width="413" height="6"/></clipPath></defs><g clip-path="url(#r5)">
<rect x="34.5" y="695.5" width="79" height="59" fill="#ffffff" stroke="#44546a" stroke-width="1"/>
<rect x="97" y="697" width="15" height="56" fill="#e8e4d8"/>
<path d="M36.5 697.5H88.5L97.5 706.5" fill="none" stroke="#b9c3d3" stroke-width="0.8"/>
<rect x="137.5" y="695.5" width="79" height="59" fill="#ffffff" stroke="#44546a" stroke-width="1"/>
<rect x="200" y="697" width="15" height="56" fill="#ffffff"/>
<path d="M139.5 697.5H191.5L200.5 706.5" fill="none" stroke="#b9c3d3" stroke-width="0.8"/>
<rect x="240.5" y="695.5" width="79" height="59" fill="#ffffff" stroke="#44546a" stroke-width="1"/>
<rect x="303" y="697" width="15" height="56" fill="#2ab0d0"/>
<path d="M242.5 697.5H294.5L303.5 706.5" fill="none" stroke="#b9c3d3" stroke-width="0.8"/>
<rect x="343.5" y="695.5" width="79" height="59" fill="#ffffff" stroke="#44546a" stroke-width="1"/>
<rect x="406" y="697" width="15" height="56" fill="#9ab0b0"/>
<path d="M345.5 697.5H397.5L406.5 706.5" fill="none" stroke="#b9c3d3" stroke-width="0.8"/>
</g>
<line x1="22" y1="700.8" x2="457" y2="700.8" stroke="#dcdcdc" stroke-width="1" />
<rect x="37" y="712" width="19" height="16.5" fill="#ffffff" stroke="#505050" stroke-width="1.2"/>
<rect x="40" y="714.5" width="13" height="2.5" fill="#2b88d8"/>
<rect x="44" y="720.5" width="12.5" height="9" fill="#ffffff" stroke="#505050" stroke-width="1.2"/>
<path d="M44 720.5H48.5V723" fill="none" stroke="#505050" stroke-width="1"/>
<text x="67.8" y="725.7" font-size="15" textLength="161.5" lengthAdjust="spacingAndGlyphs" fill="#262626" stroke="#ffffff" stroke-width="0.18">Rechercher des thèmes...</text>
<line x1="68" y1="727.8" x2="77" y2="727.8" stroke="#262626" stroke-width="1" />
<path d="M37.5 745.5H55.5V763.5H40.5L37.5 760.5Z" fill="#ffffff" stroke="#505050" stroke-width="1.3"/>
<path d="M41.5 745.5V752H51.5V745.5" fill="none" stroke="#505050" stroke-width="1.2"/>
<path d="M42 763.5V756.5H51V763.5" fill="none" stroke="#505050" stroke-width="1.2"/>
<text x="68.4" y="761.7" font-size="15" textLength="174.5" lengthAdjust="spacingAndGlyphs" fill="#262626" stroke="#ffffff" stroke-width="0.18">Enregistrer le thème actif...</text>
<line x1="205" y1="763.8" x2="213.5" y2="763.8" stroke="#262626" stroke-width="1" />
<rect x="449.5" y="777.3" width="2" height="2" fill="#8a8a8a"/>
<rect x="444.7" y="781.7" width="2" height="2" fill="#8a8a8a"/>
<rect x="449.5" y="781.7" width="2" height="2" fill="#8a8a8a"/>
<path d="M88.2 368.2V384.5L92 380.8L94.8 386.8L97.3 385.7L94.6 379.8H99.6Z" fill="#ffffff" stroke="#1a1a1a" stroke-width="1.1" stroke-linejoin="round"/>
</svg>
</body></html>
